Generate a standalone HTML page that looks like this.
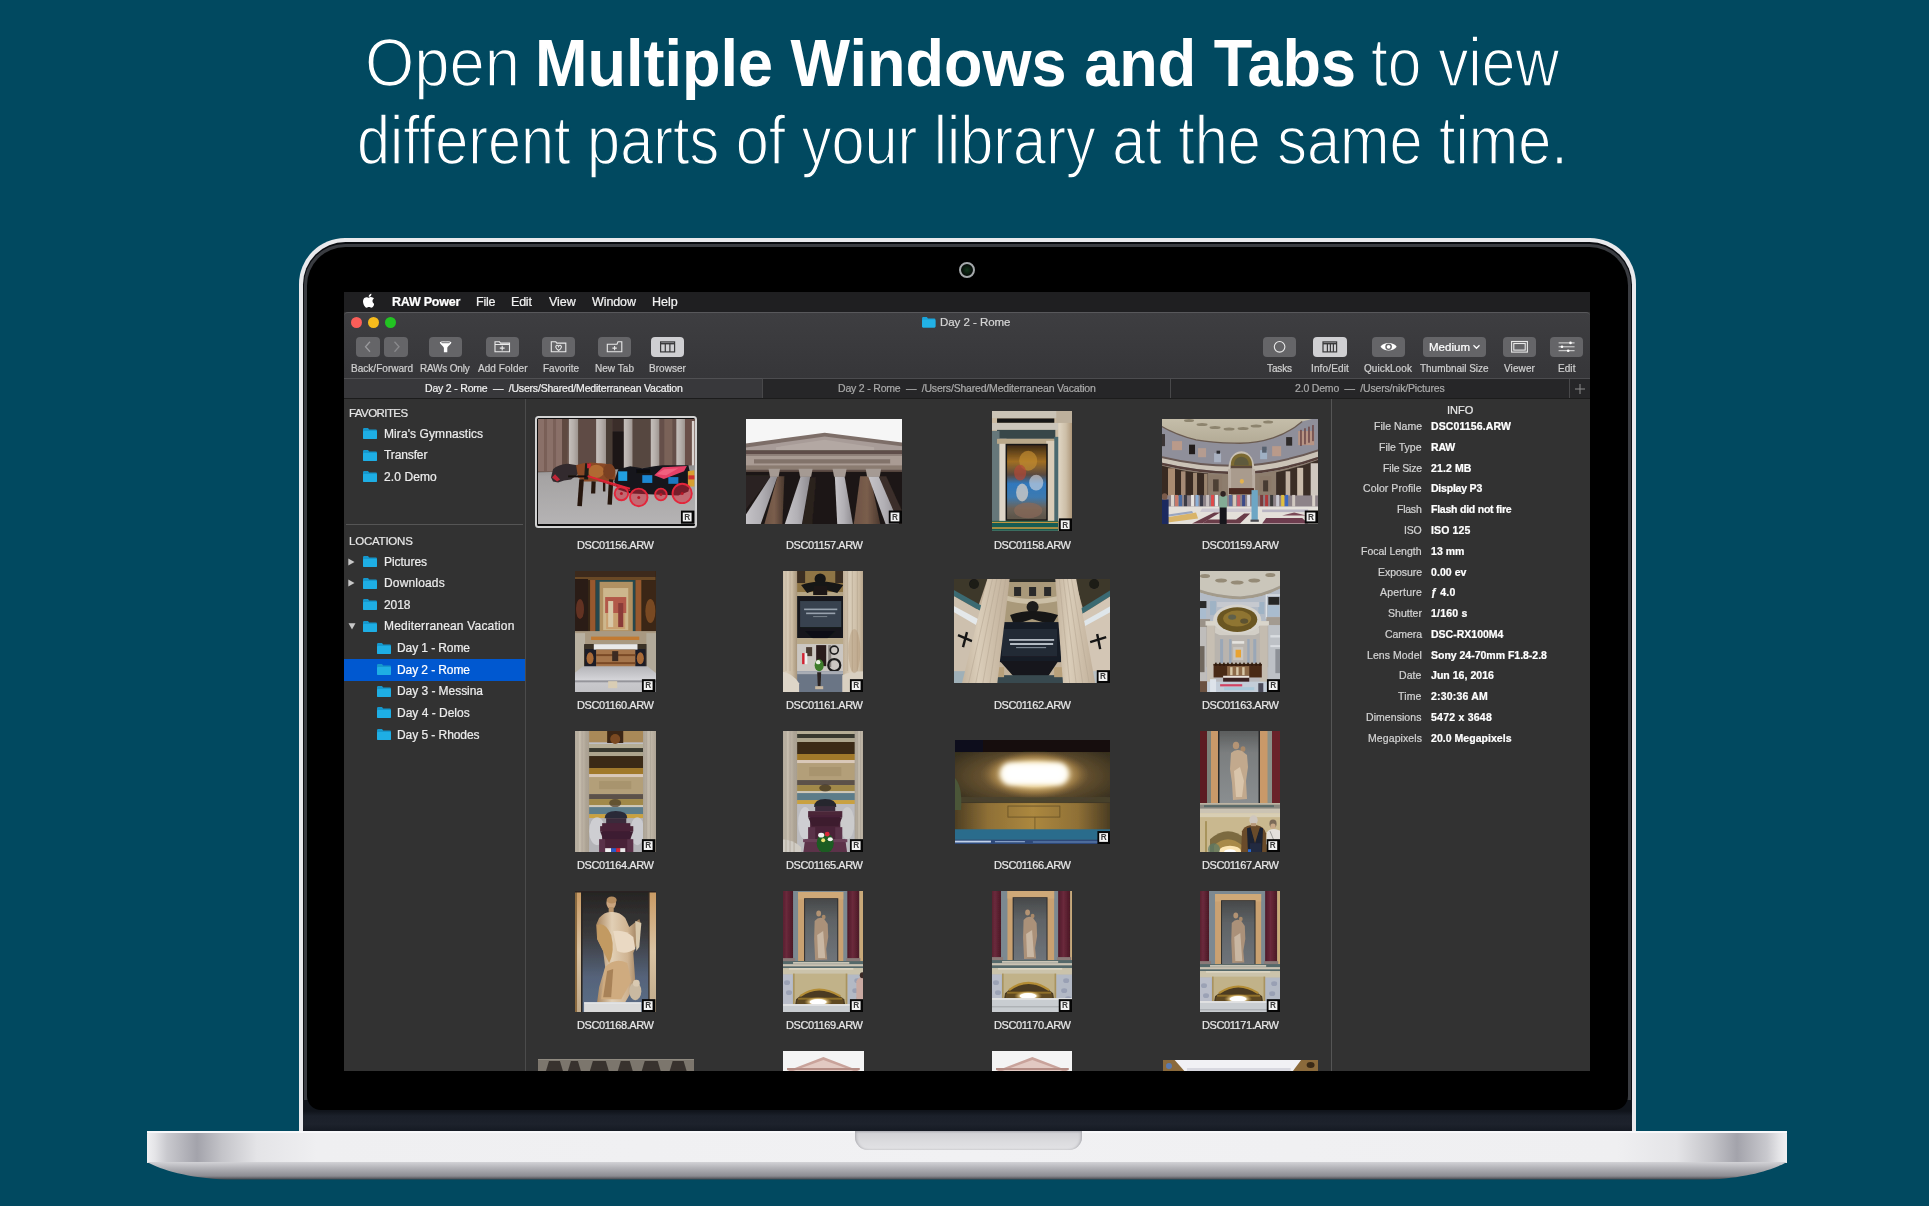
<!DOCTYPE html>
<html><head><meta charset="utf-8"><title>RAW Power</title>
<style>
*{box-sizing:border-box;margin:0;padding:0}
html,body{width:1929px;height:1206px;overflow:hidden;background:#014960;font-family:"Liberation Sans",sans-serif;}
div,span,svg{position:absolute}
.h{color:#fff;font-size:69px;white-space:nowrap;line-height:80px;transform-origin:0 0;-webkit-text-stroke:1.5px #014960}
.h.b{font-weight:bold;-webkit-text-stroke:0;font-size:66px}
.t{white-space:pre;line-height:20px;height:20px;will-change:transform;-webkit-text-stroke:.22px currentColor}
#lid{left:299px;top:238px;width:1337px;height:900px;border-radius:46px 46px 0 0;background:#e9e9ec}
#lid2{left:302.8px;top:241.7px;width:1329.4px;height:897px;border-radius:42.5px 42.5px 0 0;background:#0a0c10}
#lid3{left:303.7px;top:244.2px;width:1327.6px;height:894px;border-radius:41px 41px 0 0;background:#3a3c41}
#bezel{left:306.6px;top:246.6px;width:1321.8px;height:863.6px;border-radius:38.5px 38.5px 14px 14px;background:#000}
#hinge{left:303px;top:1100px;width:1329px;height:33px;background:linear-gradient(#10141b 0,#10141b 11px,#1b202a 16px,#1d222c 24px,#151a23 31px)}
#cam{left:959px;top:262px;width:16px;height:16px;border-radius:50%;border:2px solid #a4a8ab;background:radial-gradient(#12351b,#050a07 70%)}
#base{left:147px;top:1131px;width:1640px;height:32px;border-radius:3px 3px 0 0;
background:linear-gradient(90deg,#f0f0f2 0,#e4e4e7 8px,#c9c9ce 20px,#a3a3ab 50px,#c4c4c9 75px,#e4e4e7 110px,#efeff1 170px,#f1f1f3 820px,#efeff1 1470px,#e4e4e7 1530px,#c4c4c9 1565px,#a3a3ab 1590px,#c9c9ce 1620px,#e4e4e7 1632px,#f0f0f2 1640px)}
#basetop{left:147px;top:1131px;width:1640px;height:2px;background:#f8f8fa}
#bevel{left:147px;top:1162px;width:1640px;height:18px}
#notch{left:855px;top:1131px;width:226.5px;height:18.5px;border-radius:0 0 13px 13px;background:linear-gradient(#cfcfd3,#dcdcdf 60%,#e2e2e5);box-shadow:inset 2px 0 3px -1px #a8a8ad,inset -2px 0 3px -1px #a8a8ad,inset 0 2px 2px -1px #b4b4b9}
#screen{left:344px;top:292px;width:1246px;height:778.6px;background:#323232;overflow:hidden}
#menubar{left:344px;top:292px;width:1246px;height:20px;background:#1f1f21}
#titlebar{left:344px;top:312px;width:1246px;height:66px;background:linear-gradient(#3e3e41,#363639);border-top:1px solid #58585b;border-radius:4px 4px 0 0}
#tabbar{left:344px;top:378px;width:1246px;height:21px;background:#262628;border-top:1px solid #4c4c4f;border-bottom:1px solid #1c1c1c}
#tab1{left:344px;top:378px;width:418px;height:20px;background:#38383b;border-top:1px solid #505053}
.tsep{top:379px;width:1px;height:19px;background:#48484a}
.btn{top:337px;height:19.6px;border-radius:4px;background:#656568}
.btn.on{background:#cfcfd2}
.btn svg{left:0;top:0;width:100%;height:100%}
.tl{top:316.5px;width:11px;height:11px;border-radius:50%}
.vline{width:1px;background:#4b4b4b}
.fold{width:14px;height:11px}
</style></head><body>
<span class="h" style="left:365.3px;top:23px;transform:scaleX(.9176)">Open</span><span class="h b" style="left:534.8px;top:22.5px;transform:scaleX(.955)">Multiple Windows and Tabs</span><span class="h" style="left:1371.1px;top:23px;transform:scaleX(.8755)">to view</span>
<span class="h" style="left:357px;top:101px;transform:scaleX(.8611)">different parts of your library at the same time.</span>
<div id="lid"></div><div id="lid2"></div><div id="lid3"></div><div id="hinge"></div><div id="bezel"></div><div id="cam"></div>
<div id="base"></div><div id="basetop"></div>
<svg id="bevel" viewBox="0 0 1640 18" preserveAspectRatio="none"><defs><linearGradient id="bg1" x1="0" y1="0" x2="0" y2="1"><stop offset="0" stop-color="#d2d2d6"/><stop offset="0.35" stop-color="#b2b2b7"/><stop offset="0.8" stop-color="#8c8c92"/><stop offset="1" stop-color="#45474d"/></linearGradient></defs><path d="M0 0 H1640 C1625 8 1600 16 1560 17.5 H80 C40 16 15 8 0 0Z" fill="url(#bg1)"/></svg>
<div id="notch"></div>
<div id="screen"></div>
<div id="menubar"></div><div id="titlebar"></div><div id="tabbar"></div><div id="tab1"></div>
<div class="tsep" style="left:762px"></div><div class="tsep" style="left:1170px"></div><div class="tsep" style="left:1569px"></div>
<svg style="left:361.5px;top:293px;width:12.5px;height:14.8px" viewBox="0 0 170 200"><path fill="#fff" d="M150 105c0-25 20-37 21-38-12-17-30-19-36-19-15-2-30 9-38 9s-20-9-33-9c-17 0-33 10-41 25-18 31-5 76 12 101 9 12 19 26 32 25 13-1 18-8 33-8s20 8 33 8c14 0 22-12 31-25 10-14 14-28 14-29-1 0-27-10-28-40zM125 30c7-9 12-20 10-32-10 0-22 7-29 15-6 7-12 19-10 30 11 1 22-6 29-13z" transform="translate(0,10) scale(0.95)"/></svg>
<div class="tl" style="left:351.0px;background:#fb5e59"></div><div class="tl" style="left:368.3px;background:#f6bb1c"></div><div class="tl" style="left:385.3px;background:#22c322"></div>
<svg class="fold" style="left:922px;top:317px;width:13.5px;height:10.5px" viewBox="0 0 14 11"><path d="M0 1.2Q0 0 1.2 0H5l1.2 1.5H12.8Q14 1.5 14 2.7V9.8Q14 11 12.8 11H1.2Q0 11 0 9.8Z" fill="#1aa3d9"/><rect x="0" y="3" width="14" height="8" rx="1" fill="#22b2e6"/></svg>
<div class="btn" style="left:356.1px;width:24.3px"><svg viewBox="0 0 24.3 19"><path d="M14 4.5L9.5 9.5L14 14.5" fill="none" stroke="#9a9a9d" stroke-width="1.3"/></svg></div>
<div class="btn" style="left:383.8px;width:24.3px"><svg viewBox="0 0 24.3 19"><path d="M10.5 4.5L15 9.5L10.5 14.5" fill="none" stroke="#8a8a8d" stroke-width="1.3"/></svg></div>
<div class="btn" style="left:428.9px;width:33.2px"><svg viewBox="0 0 33.2 19"><path d="M10.8 5.2C10.8 3.6 22.4 3.6 22.4 5.2C22.4 6.2 18.3 9.8 18.3 10.6V15H14.9V10.6C14.9 9.8 10.8 6.2 10.8 5.2Z" fill="#fff"/><ellipse cx="16.6" cy="5.1" rx="4.3" ry="0.9" fill="#8a8a8d"/></svg></div>
<div class="btn" style="left:486.2px;width:33.0px"><svg viewBox="0 0 33 19"><path d="M9 4.5H13.5L14.5 5.8H23.5V14.5H9Z" fill="none" stroke="#e9e9e9" stroke-width="1.1"/><path d="M9 7.2H23.5M16.2 8.5V13.2M13.8 10.8H18.6" stroke="#e9e9e9" stroke-width="1.1" fill="none"/></svg></div>
<div class="btn" style="left:541.8px;width:33.3px"><svg viewBox="0 0 33.3 19"><path d="M9.3 4.5H13.8L14.8 5.8H23.8V14.5H9.3Z" fill="none" stroke="#e9e9e9" stroke-width="1.1"/><path d="M16.6 13.2C13.4 11 13.2 8.6 14.6 8.1C15.6 7.8 16.4 8.5 16.6 9.1C16.8 8.5 17.6 7.8 18.6 8.1C20 8.6 19.8 11 16.6 13.2Z" fill="none" stroke="#e9e9e9" stroke-width="1.1"/></svg></div>
<div class="btn" style="left:597.8px;width:33.1px"><svg viewBox="0 0 33.1 19"><path d="M9.3 14.5V7H19L20 4.5H23.8V14.5Z" fill="none" stroke="#e9e9e9" stroke-width="1.1"/><path d="M16.6 8.6V13M14.4 10.8H18.8" stroke="#e9e9e9" stroke-width="1.1"/></svg></div>
<div class="btn on" style="left:651.0px;width:33.2px"><svg viewBox="0 0 33.2 19"><rect x="9.6" y="4.6" width="14" height="10" fill="none" stroke="#3a3a3c" stroke-width="1.2"/><path d="M9.6 6.3H23.6" stroke="#3a3a3c" stroke-width="1.6"/><path d="M14.3 6V14.6M18.9 6V14.6" stroke="#3a3a3c" stroke-width="1.2"/></svg></div>
<div class="btn" style="left:1262.8px;width:33.2px"><svg viewBox="0 0 33.2 19"><circle cx="16.6" cy="9.5" r="5.3" fill="none" stroke="#e9e9e9" stroke-width="1.1"/></svg></div>
<div class="btn on" style="left:1313.2px;width:33.6px"><svg viewBox="0 0 33.6 19"><rect x="10" y="4.6" width="13.6" height="10" fill="none" stroke="#3a3a3c" stroke-width="1.2"/><path d="M10 6.3H23.6" stroke="#3a3a3c" stroke-width="1.6"/><path d="M14.4 6V14.6M17.4 6V14.6M20.4 6V14.6" stroke="#3a3a3c" stroke-width="1.2"/></svg></div>
<div class="btn" style="left:1371.8px;width:33.2px"><svg viewBox="0 0 33.2 19"><path d="M8.5 9.5C11.5 4.6 21.7 4.6 24.7 9.5C21.7 14.4 11.5 14.4 8.5 9.5Z" fill="#fff"/><circle cx="16.6" cy="9.5" r="3.3" fill="#656568"/><circle cx="16.6" cy="9.5" r="1.9" fill="#fff"/></svg></div>
<div class="btn" style="left:1422.9px;width:63.1px"><svg viewBox="0 0 63.1 19"><path d="M50.5 8L53.5 11L56.5 8" fill="none" stroke="#fff" stroke-width="1.2"/></svg></div>
<div class="btn" style="left:1502.8px;width:33.0px"><svg viewBox="0 0 33 19"><rect x="8.6" y="4.2" width="15.8" height="10.6" fill="none" stroke="#e9e9e9" stroke-width="1.1"/><rect x="10.8" y="6.2" width="11.4" height="6.6" fill="none" stroke="#e9e9e9" stroke-width="1.1"/></svg></div>
<div class="btn" style="left:1549.8px;width:33.2px"><svg viewBox="0 0 33.2 19"><path d="M8.6 5.6H24.6M8.6 9.5H24.6M8.6 13.4H24.6" stroke="#e9e9e9" stroke-width="0.9"/><circle cx="20.5" cy="5.6" r="1.3" fill="#fff"/><circle cx="12" cy="9.5" r="1.3" fill="#fff"/><circle cx="18.2" cy="13.4" r="1.3" fill="#fff"/></svg></div>
<svg style="left:1574px;top:383px;width:12px;height:12px" viewBox="0 0 12 12"><path d="M6 1V11M1 6H11" stroke="#8c8c8c" stroke-width="1"/></svg>
<div class="vline" style="left:525px;top:399px;height:671.6px"></div><div class="vline" style="left:1330.5px;top:399px;height:671.6px;background:#555"></div>
<div style="left:346px;top:524px;width:177px;height:1px;background:#555"></div>
<div style="left:344px;top:659.3px;width:181px;height:21.5px;background:#0058d0"></div>
<svg class="fold" style="left:363.0px;top:428.1px" viewBox="0 0 14 11"><path d="M0 1.2Q0 0 1.2 0H5l1.2 1.5H12.8Q14 1.5 14 2.7V9.8Q14 11 12.8 11H1.2Q0 11 0 9.8Z" fill="#1597cc"/><rect x="0" y="3" width="14" height="8" rx="1" fill="#1eaee4"/></svg><svg class="fold" style="left:363.0px;top:449.5px" viewBox="0 0 14 11"><path d="M0 1.2Q0 0 1.2 0H5l1.2 1.5H12.8Q14 1.5 14 2.7V9.8Q14 11 12.8 11H1.2Q0 11 0 9.8Z" fill="#1597cc"/><rect x="0" y="3" width="14" height="8" rx="1" fill="#1eaee4"/></svg><svg class="fold" style="left:363.0px;top:471.3px" viewBox="0 0 14 11"><path d="M0 1.2Q0 0 1.2 0H5l1.2 1.5H12.8Q14 1.5 14 2.7V9.8Q14 11 12.8 11H1.2Q0 11 0 9.8Z" fill="#1597cc"/><rect x="0" y="3" width="14" height="8" rx="1" fill="#1eaee4"/></svg><svg class="fold" style="left:363.0px;top:556.0px" viewBox="0 0 14 11"><path d="M0 1.2Q0 0 1.2 0H5l1.2 1.5H12.8Q14 1.5 14 2.7V9.8Q14 11 12.8 11H1.2Q0 11 0 9.8Z" fill="#1597cc"/><rect x="0" y="3" width="14" height="8" rx="1" fill="#1eaee4"/></svg><svg class="fold" style="left:363.0px;top:577.5px" viewBox="0 0 14 11"><path d="M0 1.2Q0 0 1.2 0H5l1.2 1.5H12.8Q14 1.5 14 2.7V9.8Q14 11 12.8 11H1.2Q0 11 0 9.8Z" fill="#1597cc"/><rect x="0" y="3" width="14" height="8" rx="1" fill="#1eaee4"/></svg><svg class="fold" style="left:363.0px;top:598.9px" viewBox="0 0 14 11"><path d="M0 1.2Q0 0 1.2 0H5l1.2 1.5H12.8Q14 1.5 14 2.7V9.8Q14 11 12.8 11H1.2Q0 11 0 9.8Z" fill="#1597cc"/><rect x="0" y="3" width="14" height="8" rx="1" fill="#1eaee4"/></svg><svg class="fold" style="left:363.0px;top:620.7px" viewBox="0 0 14 11"><path d="M0 1.2Q0 0 1.2 0H5l1.2 1.5H12.8Q14 1.5 14 2.7V9.8Q14 11 12.8 11H1.2Q0 11 0 9.8Z" fill="#1597cc"/><rect x="0" y="3" width="14" height="8" rx="1" fill="#1eaee4"/></svg><svg class="fold" style="left:376.8px;top:642.5px" viewBox="0 0 14 11"><path d="M0 1.2Q0 0 1.2 0H5l1.2 1.5H12.8Q14 1.5 14 2.7V9.8Q14 11 12.8 11H1.2Q0 11 0 9.8Z" fill="#1597cc"/><rect x="0" y="3" width="14" height="8" rx="1" fill="#1eaee4"/></svg><svg class="fold" style="left:376.8px;top:664.2px" viewBox="0 0 14 11"><path d="M0 1.2Q0 0 1.2 0H5l1.2 1.5H12.8Q14 1.5 14 2.7V9.8Q14 11 12.8 11H1.2Q0 11 0 9.8Z" fill="#1597cc"/><rect x="0" y="3" width="14" height="8" rx="1" fill="#1eaee4"/></svg><svg class="fold" style="left:376.8px;top:685.7px" viewBox="0 0 14 11"><path d="M0 1.2Q0 0 1.2 0H5l1.2 1.5H12.8Q14 1.5 14 2.7V9.8Q14 11 12.8 11H1.2Q0 11 0 9.8Z" fill="#1597cc"/><rect x="0" y="3" width="14" height="8" rx="1" fill="#1eaee4"/></svg><svg class="fold" style="left:376.8px;top:707.3px" viewBox="0 0 14 11"><path d="M0 1.2Q0 0 1.2 0H5l1.2 1.5H12.8Q14 1.5 14 2.7V9.8Q14 11 12.8 11H1.2Q0 11 0 9.8Z" fill="#1597cc"/><rect x="0" y="3" width="14" height="8" rx="1" fill="#1eaee4"/></svg><svg class="fold" style="left:376.8px;top:729.0px" viewBox="0 0 14 11"><path d="M0 1.2Q0 0 1.2 0H5l1.2 1.5H12.8Q14 1.5 14 2.7V9.8Q14 11 12.8 11H1.2Q0 11 0 9.8Z" fill="#1597cc"/><rect x="0" y="3" width="14" height="8" rx="1" fill="#1eaee4"/></svg>
<svg style="left:348px;top:557.8px;width:7px;height:8px" viewBox="0 0 7 8"><path d="M0.3 0.5L6.5 4L0.3 7.5Z" fill="#c8c8c8"/></svg><svg style="left:348px;top:579.3px;width:7px;height:8px" viewBox="0 0 7 8"><path d="M0.3 0.5L6.5 4L0.3 7.5Z" fill="#c8c8c8"/></svg><svg style="left:347.5px;top:623px;width:8px;height:7px" viewBox="0 0 8 7"><path d="M0.5 0.3H7.5L4 6.5Z" fill="#c8c8c8"/></svg>
<div id="gridclip" style="left:526px;top:399px;width:804px;height:671.6px;overflow:hidden;will-change:transform">
<div style="left:8.9px;top:16.9px;width:162.4px;height:111.7px;border:2px solid #d2d2d2;border-radius:3.5px;background:#0c0c0c"></div>
<svg style="left:12.2px;top:20.4px;width:156.4px;height:104.7px" viewBox="0 0 156 104" preserveAspectRatio="none"><defs><linearGradient id="g1" x1="0" y1="0" x2="0" y2="1"><stop offset="0" stop-color="#5d4a43"/><stop offset="1" stop-color="#6b574e"/></linearGradient><linearGradient id="g2" x1="0" y1="0" x2="0" y2="1"><stop offset="0" stop-color="#918f8f"/><stop offset="0.18" stop-color="#a5a3a3"/><stop offset="1" stop-color="#b7b5b6"/></linearGradient><linearGradient id="g3" x1="0" y1="0" x2="1" y2="0"><stop offset="0" stop-color="#c5bfbb"/><stop offset="0.5" stop-color="#b6afab"/><stop offset="1" stop-color="#9e9590"/></linearGradient><filter id="b2001" x="-10%" y="-10%" width="120%" height="120%"><feGaussianBlur stdDeviation="0.6"/></filter></defs><g filter="url(#b2001)"><rect x="-5" y="-5" width="166" height="58" fill="url(#g1)"/><rect x="-5" y="-2" width="33" height="54" fill="#8a7068"/><rect x="6" y="-2" width="3" height="54" fill="#7a6058"/><rect x="15" y="-2" width="3" height="54" fill="#7a6058"/><rect x="24" y="-2" width="5" height="54" fill="#5e4840"/><rect x="40" y="-2" width="18" height="54" fill="#5e4c44"/><rect x="67.8" y="-2" width="7" height="52" fill="#4a3c36"/><rect x="94.2" y="-2" width="18.5" height="52" fill="#574740"/><rect x="121" y="-2" width="17" height="50" fill="#65504a"/><rect x="126" y="0" width="8" height="48" fill="#7a6258"/><rect x="74.5" y="-2" width="11.1" height="52" fill="#3a2e2a"/><rect x="74.5" y="12.5" width="11.1" height="38" fill="#1a1614"/><rect x="146.6" y="-2" width="10" height="50" fill="#6a5048"/><rect x="30.8" y="-2" width="9.2" height="52.23" fill="url(#g3)"/><rect x="58" y="-2" width="9.8" height="51.55" fill="url(#g3)"/><rect x="85.6" y="-2" width="8.6" height="50.86" fill="url(#g3)"/><rect x="112.5" y="-2" width="8.5" height="50.1875" fill="url(#g3)"/><rect x="138" y="-2" width="8.6" height="49.55" fill="url(#g3)"/><rect x="153.5" y="2" width="2.5" height="46" fill="#dcd4d0"/><path d="M-5 53 L30 52.5 L80 50 L156 46 L160 46 L160 110 L-5 110 Z" fill="url(#g2)"/><path d="M13 58 L15 50 Q20 45 30 44.5 L39 46 L41 54 L33 60 L26 61 L20 63 L15 62 Z" fill="#332b2d"/><path d="M17 55 L22 60 L19 62 L14 58 Z" fill="#c02838"/><path d="M38 46 Q48 42 60 44 Q72 43 77 50 L77.5 60 Q70 63 60 62 L46 62 L40 58 Z" fill="#8a4a25"/><ellipse cx="58" cy="52" rx="8" ry="6.5" fill="#b06b31"/><ellipse cx="71" cy="52" rx="6" ry="7.5" fill="#7a4020"/><path d="M47 44 L51 44 L50 60 L46 60 Z" fill="#1d1a18"/><path d="M49 44 L53 44.5 L52 49 L49 49 Z" fill="#d02838"/><path d="M43.5 60 L41.5 86.5" stroke="#27170f" stroke-width="4.6" fill="none"/><path d="M73 60 L71.5 85" stroke="#27170f" stroke-width="4.4" fill="none"/><path d="M55.5 62 L55 74" stroke="#27170f" stroke-width="4.2" fill="none"/><path d="M66 62 L66 72" stroke="#27170f" stroke-width="2.4" fill="none"/><path d="M30 57 L48 57" stroke="#15110f" stroke-width="2" fill="none"/><path d="M76 62 L80 50 L92 47 L104 49 L116 47 L124 46 L150 46 L153 60 L150 72 L140 76 L92 74 L80 70 Z" fill="#16171c"/><path d="M115.9 55.8 L124.5 48 L148.5 46.6 L145.7 52 L125.5 59.6 Z" fill="#e53f66"/><path d="M118 55 L126 50 L140 49 L128 56 Z" fill="#f0607e"/><rect x="80" y="52" width="9" height="9.5" fill="#20a0e0"/><rect x="104" y="55.8" width="10" height="7.7" fill="#1c88d2"/><rect x="130" y="57.7" width="10" height="6.7" fill="#1a78c0"/><rect x="98" y="50" width="14" height="4" fill="#0c0c10"/><path d="M149.5 52 L156 51 L156 67 L149.5 67 Z" fill="#d8a030"/><rect x="150" y="56" width="6" height="4" fill="#d03030"/><path d="M49.5 56.7 L91.8 69.2" stroke="#e02335" stroke-width="1.8" fill="none"/><path d="M60 61 L92 71" stroke="#c81e2e" stroke-width="1.2" fill="none"/><circle cx="83.2" cy="74" r="6.7" fill="#d8283a" fill-opacity=".5" stroke="#e3263a" stroke-width="1.9"/><circle cx="83.2" cy="74" r="1.5" fill="#b81828"/><circle cx="100.5" cy="77.9" r="8.7" fill="#d8283a" fill-opacity=".5" stroke="#e3263a" stroke-width="1.9"/><circle cx="100.5" cy="77.9" r="1.5" fill="#b81828"/><circle cx="122.6" cy="75" r="5.8" fill="#d8283a" fill-opacity=".5" stroke="#e3263a" stroke-width="1.9"/><circle cx="122.6" cy="75" r="1.5" fill="#b81828"/><circle cx="143.8" cy="74" r="9.6" fill="#d8283a" fill-opacity=".5" stroke="#e3263a" stroke-width="1.9"/><circle cx="143.8" cy="74" r="1.5" fill="#b81828"/></g><rect x="142.6" y="91" width="13.4" height="13" fill="#050505"/><rect x="144.4" y="93" width="8.8" height="8.8" fill="#f2f2f2"/><text x="148.8" y="100.3" font-family="Liberation Sans,sans-serif" font-weight="bold" font-size="8.2" fill="#3a3a3a" text-anchor="middle">R</text></svg>
<svg style="left:220.0px;top:20.2px;width:156.2px;height:104.6px" viewBox="0 0 156 104" preserveAspectRatio="none"><defs><linearGradient id="g4" x1="0" y1="0" x2="1" y2="0"><stop offset="0" stop-color="#c6c4c8"/><stop offset="0.5" stop-color="#b2b0b5"/><stop offset="1" stop-color="#8e8b90"/></linearGradient><linearGradient id="g5" x1="0" y1="0" x2="1" y2="0"><stop offset="0" stop-color="#6c5244"/><stop offset="0.5" stop-color="#7a5e4c"/><stop offset="1" stop-color="#4a382e"/></linearGradient><filter id="b2002" x="-10%" y="-10%" width="120%" height="120%"><feGaussianBlur stdDeviation="0.6"/></filter></defs><g filter="url(#b2002)"><rect x="-5" y="-5" width="166" height="60" fill="#f6f6f6"/><rect x="-5" y="50" width="166" height="60" fill="#1f1917"/><path d="M-2 24.5 L78.6 13.6 L158 23.6 L158 52 L-2 52 Z" fill="#7d6e68"/><path d="M-2 28.5 L78.6 17.4 L158 27.4 L158 33 L-2 33 Z" fill="#a89c98"/><path d="M30 28 L78.6 20.6 L128 28 L128 31.5 L30 31.5 Z" fill="#b3a8a3"/><rect x="-2" y="31" width="160" height="4" fill="#5e4e48"/><rect x="-2" y="34.8" width="160" height="2.2" fill="#8d7e77"/><rect x="-2" y="36.7" width="160" height="9.8" fill="#a99b93"/><rect x="8" y="40" width="136" height="4.2" fill="#75655e" fill-opacity=".75"/><rect x="-2" y="46.3" width="160" height="5" fill="#8b7b71"/><rect x="-2" y="50.5" width="160" height="2" fill="#5c4c44"/><path d="M-2 56 L26 56 L-2 92 Z" fill="#2b2322"/><path d="M31.5 57 L38.3 57 L36.3 106 L18 106 Z" fill="url(#g5)"/><path d="M114 57 L124 57 L134.4 106 L107.5 106 Z" fill="url(#g5)"/><path d="M64 58 L70 58 L66 106 L56 106 Z" fill="#33282280"/><path d="M133 57 L140 57 L158 96 L158 106 L150 106 Z" fill="#3a2e2a"/><path d="M24.8 57 L31.5 57 L14.2 106 L-2 106 L-2 98 Z" fill="url(#g4)"/><path d="M54.6 57 L64.2 57 L55.6 106 L38.3 106 Z" fill="url(#g4)"/><path d="M88.7 57 L98.4 57 L107 106 L91.2 106 Z" fill="url(#g4)"/><path d="M122 57 L132.5 57 L153.6 106 L140 106 Z" fill="url(#g4)"/><path d="M22.5 49.5 L34 49.5 L32.5 57.5 L24 57.5 Z" fill="#a59a93"/><path d="M52.5 49.5 L66.5 49.5 L65 57.5 L54 57.5 Z" fill="#a59a93"/><path d="M86.5 49.5 L100.5 49.5 L99 57.5 L88 57.5 Z" fill="#a59a93"/><path d="M119.5 49.5 L135 49.5 L133.5 57.5 L121 57.5 Z" fill="#a59a93"/></g><rect x="142.6" y="91" width="13.4" height="13" fill="#050505"/><rect x="144.4" y="93" width="8.8" height="8.8" fill="#f2f2f2"/><text x="148.8" y="100.3" font-family="Liberation Sans,sans-serif" font-weight="bold" font-size="8.2" fill="#3a3a3a" text-anchor="middle">R</text></svg>
<svg style="left:465.9px;top:11.9px;width:80.4px;height:120.3px" viewBox="0 0 80 121" preserveAspectRatio="none"><defs><linearGradient id="g6" x1="0" y1="0" x2="0" y2="1"><stop offset="0" stop-color="#3d2a14"/><stop offset="0.22" stop-color="#a06e24"/><stop offset="0.4" stop-color="#5a4a40"/><stop offset="0.52" stop-color="#2f78bd"/><stop offset="0.7" stop-color="#3d7ab0"/><stop offset="0.85" stop-color="#6b6258"/><stop offset="1" stop-color="#5b5348"/></linearGradient><linearGradient id="g7" x1="0" y1="0" x2="1" y2="0"><stop offset="0" stop-color="#e0d6c4"/><stop offset="0.5" stop-color="#cdbfa8"/><stop offset="1" stop-color="#a88f70"/></linearGradient><filter id="b2003" x="-10%" y="-10%" width="120%" height="120%"><feGaussianBlur stdDeviation="0.6"/></filter></defs><g filter="url(#b2003)"><rect x="-5" y="-5" width="90" height="130" fill="#c9b9a1"/><rect x="0" y="0" width="80" height="7" fill="#cac3b6"/><rect x="5" y="7.5" width="57" height="4.4" fill="#181816"/><rect x="0" y="12" width="66" height="7" fill="#cbc5ba"/><rect x="5" y="19" width="58" height="9" fill="#37474a"/><rect x="0" y="20" width="7.5" height="91" fill="#66777a"/><rect x="7.5" y="28" width="7" height="83" fill="#ddd5c8"/><rect x="5" y="28" width="58" height="5" fill="#b9a88a"/><rect x="54" y="30" width="9" height="81" fill="#d9cdb9"/><rect x="62" y="26" width="4.5" height="85" fill="#48696f"/><rect x="66" y="10" width="15" height="102" fill="url(#g7)"/><rect x="64" y="0" width="17" height="12" fill="#bdb09c"/><rect x="13.5" y="33" width="42" height="77.5" fill="#131313"/><rect x="15" y="34.5" width="39" height="74.5" fill="url(#g6)"/><ellipse cx="36" cy="50" rx="9" ry="10" fill="#c08a30" fill-opacity=".7"/><ellipse cx="28" cy="62" rx="6" ry="8" fill="#b04838" fill-opacity=".7"/><ellipse cx="30" cy="82" rx="6" ry="9" fill="#d8d0c8" fill-opacity=".75"/><ellipse cx="44" cy="72" rx="7" ry="8" fill="#d8dce4" fill-opacity=".6"/><ellipse cx="36" cy="100" rx="14" ry="8" fill="#8a6a58" fill-opacity=".7"/><rect x="0" y="110.5" width="66" height="10" fill="#175b52"/><rect x="0" y="111.5" width="66" height="1" fill="#e2a13e"/><rect x="0" y="117" width="66" height="1.4" fill="#e2a13e"/><rect x="66" y="110.5" width="15" height="10" fill="#8a7a60"/></g><rect x="66.6" y="108" width="13.4" height="13" fill="#050505"/><rect x="68.4" y="110" width="8.8" height="8.8" fill="#f2f2f2"/><text x="72.8" y="117.3" font-family="Liberation Sans,sans-serif" font-weight="bold" font-size="8.2" fill="#3a3a3a" text-anchor="middle">R</text></svg>
<svg style="left:636.3px;top:20.2px;width:156.2px;height:104.6px" viewBox="0 0 156 104" preserveAspectRatio="none"><defs><linearGradient id="g8" x1="0" y1="0" x2="0" y2="1"><stop offset="0" stop-color="#c6bfab"/><stop offset="1" stop-color="#b3ab96"/></linearGradient><filter id="b2004" x="-10%" y="-10%" width="120%" height="120%"><feGaussianBlur stdDeviation="0.6"/></filter></defs><g filter="url(#b2004)"><rect x="-5" y="-5" width="166" height="115" fill="#8f8f9a"/><path d="M-2 -2 L158 -2 L140 2.4 Q128 13 111 18.8 Q92 25 72 24 Q50 23.5 34 20.7 Q14 16 -2 6.5 Z" fill="url(#g8)"/><ellipse cx="27" cy="1.5" rx="5" ry="1.5" fill="#8d846e"/><ellipse cx="40" cy="5.5" rx="5.5" ry="1.5" fill="#8d846e"/><ellipse cx="53" cy="8.5" rx="5.5" ry="1.5" fill="#8d846e"/><ellipse cx="67" cy="10" rx="5.5" ry="1.5" fill="#8d846e"/><ellipse cx="81" cy="9.5" rx="5.5" ry="1.5" fill="#8d846e"/><ellipse cx="94" cy="7" rx="5.5" ry="1.5" fill="#8d846e"/><ellipse cx="106" cy="3" rx="5" ry="1.5" fill="#8d846e"/><path d="M-2 6.5 Q14 16 34 20.7 Q50 23.5 72 24 Q92 25 111 18.8 Q128 13 140 2.4" fill="none" stroke="#6b5b51" stroke-width="1.3"/><rect x="10" y="22" width="10" height="9" fill="#b99a8a"/><rect x="36" y="29" width="8" height="9" fill="#b59c90"/><rect x="52" y="34" width="7" height="9" fill="#a9b1c1"/><rect x="98" y="31" width="7" height="9" fill="#9fb0c4"/><rect x="110" y="27" width="9" height="10" fill="#b99a8a"/><rect x="136" y="12" width="16" height="14" fill="#b79484"/><rect x="27" y="25.5" width="6" height="9.5" fill="#241f1c"/><rect x="-2" y="15" width="5" height="12" fill="#3a3634"/><rect x="124" y="18" width="6" height="8.5" fill="#2f2b2a"/><rect x="54.5" y="31.5" width="3.5" height="3" fill="#2a2a2e"/><rect x="100" y="27.5" width="4.5" height="6" fill="#56606e"/><rect x="138" y="10.8" width="1.6" height="16" fill="#6e4a4a"/><rect x="142" y="9.2" width="1.6" height="16" fill="#6e4a4a"/><rect x="146" y="7.6" width="1.6" height="16" fill="#6e4a4a"/><rect x="150" y="6" width="1.6" height="16" fill="#6e4a4a"/><path d="M-2 38 Q36 47 72 47 Q112 47 158 31 L158 37 Q112 53 72 52.5 Q36 52 -2 43 Z" fill="#cbc3b7"/><path d="M-2 36.5 Q36 45.5 72 45.5 Q112 45.5 158 29.5 L158 31.5 Q112 47.5 72 47.5 Q36 47.5 -2 38.5 Z" fill="#6a5a55"/><path d="M-2 43 Q36 52 72 52.5 Q112 53 158 37 L158 39.5 Q112 55.5 72 55 Q36 54.5 -2 45.5 Z" fill="#57403a"/><path d="M-2 45.5 Q36 54.5 72 55 Q112 55.5 158 39.5 L158 90 L-2 90 Z" fill="#8d7d6d"/><path d="M-2 46 Q24 53 46 54.3 L46 76 L-2 76 Z" fill="#372a23"/><path d="M114 53 Q138 48 158 40 L158 80 L114 78 Z" fill="#3a2e28"/><rect x="6" y="49" width="7" height="33" fill="#a98b71"/><rect x="19" y="52" width="4.5" height="30" fill="#a58a74"/><rect x="31" y="53.5" width="4" height="28.5" fill="#9f8872"/><rect x="42" y="54.5" width="3.6" height="27.5" fill="#9a846e"/><rect x="123.5" y="52" width="4.6" height="30" fill="#c1b1a1"/><rect x="135" y="48.5" width="6" height="33.5" fill="#cbbcab"/><rect x="148.5" y="44" width="8" height="38" fill="#cfc7bf"/><rect x="47.6" y="56" width="12.5" height="16" fill="#8b7969"/><rect x="51" y="60" width="5.6" height="12" fill="#4e4036"/><rect x="97.6" y="57" width="11.5" height="15" fill="#8b7969"/><rect x="101" y="61" width="5" height="11" fill="#463a32"/><path d="M66 56 Q65.5 32.5 79.3 32 Q93 32.5 92.6 56 Z" fill="#c9c1b5"/><path d="M68.6 47 Q68.6 34.6 79.3 34.2 Q90 34.6 90 47 Z" fill="#7b6a31"/><path d="M72 46 Q72 38 79.3 37.6 Q86.6 38 86.6 46 Z" fill="#5f5a3c"/><rect x="68.6" y="46.5" width="21.4" height="3" fill="#5a463a"/><rect x="68.6" y="49" width="21.4" height="20" fill="#a99b8d"/><rect x="66" y="50" width="3" height="26" fill="#b9ada1"/><rect x="90" y="50" width="3" height="26" fill="#b9ada1"/><ellipse cx="79.8" cy="62" rx="2" ry="2.3" fill="#e3b24e"/><rect x="66.8" y="68.7" width="25" height="6" fill="#4b2b21"/><rect x="-2" y="76" width="160" height="14" fill="#8d8388"/><rect x="9" y="75.5" width="3" height="11.5" fill="#dcd4cc"/><rect x="13" y="75.5" width="3" height="11.5" fill="#c87a6a"/><rect x="17" y="75.5" width="3" height="11.5" fill="#4a6aa0"/><rect x="22" y="75.5" width="3" height="11.5" fill="#3a3a44"/><rect x="29" y="75.5" width="3" height="11.5" fill="#e8e4e0"/><rect x="33.5" y="75.5" width="3" height="11.5" fill="#8ab0d8"/><rect x="38" y="75.5" width="3" height="11.5" fill="#3a3a48"/><rect x="44" y="75.5" width="3" height="11.5" fill="#c8c0c0"/><rect x="49" y="75.5" width="3" height="11.5" fill="#e04848"/><rect x="53" y="75.5" width="3" height="11.5" fill="#e8e8e8"/><rect x="67" y="75.5" width="3" height="11.5" fill="#5a6a9a"/><rect x="71" y="75.5" width="3" height="11.5" fill="#d8c8b8"/><rect x="75" y="75.5" width="3" height="11.5" fill="#c85a6a"/><rect x="80" y="75.5" width="3" height="11.5" fill="#3a4a88"/><rect x="85" y="75.5" width="3" height="11.5" fill="#d8d8e0"/><rect x="98" y="75.5" width="3" height="11.5" fill="#7a3a3a"/><rect x="103" y="75.5" width="3" height="11.5" fill="#b03838"/><rect x="108" y="75.5" width="3" height="11.5" fill="#3a3a3a"/><rect x="114" y="75.5" width="3" height="11.5" fill="#c8c8d0"/><rect x="119" y="75.5" width="3" height="11.5" fill="#e0c040"/><rect x="123" y="75.5" width="3" height="11.5" fill="#3a68c0"/><rect x="130" y="75.5" width="3" height="11.5" fill="#d0c8c0"/><rect x="150" y="75.5" width="3" height="11.5" fill="#d8d0c8"/><rect x="-2" y="87" width="160" height="22" fill="#e4e0da"/><path d="M30 104 L52 93 L58 93 L40 104 Z" fill="#6b3c4a"/><path d="M40 104 L46 100 L74 100 L82 94 L88 94 L78 104 Z" fill="#6b3c4a"/><path d="M4 98 L34 93 L36 99 L6 103 Z" fill="#d9b468"/><path d="M6 95 L30 91.5 L31 93.5 L7 97 Z" fill="#9aa6c0"/><path d="M100 104 L104 98.5 L140 98.5 L146 104 Z" fill="#6e3e50"/><rect x="100" y="90" width="46" height="2.6" fill="#b9b5c3"/><path d="M120 96 L132 93 L144 96 Z" fill="#7a4858"/><path d="M40 89 L96 89 L92 92.5 L38 92.5 Z" fill="#cdc8d0"/><rect x="57.6" y="87.5" width="7" height="18" fill="#17171b"/><rect x="57.2" y="76.5" width="7.8" height="11.5" fill="#83ab95"/><ellipse cx="61" cy="74.4" rx="2.7" ry="2.9" fill="#2e2420"/><rect x="-2" y="80" width="8.6" height="26" fill="#1b2b5e"/><ellipse cx="2.6" cy="77" rx="2.8" ry="3.2" fill="#7a5a4a"/><rect x="89.4" y="70.7" width="6.3" height="30.7" fill="#6ea6c4"/><rect x="88.4" y="100" width="8.3" height="2.2" fill="#4a4a50"/></g><rect x="142.6" y="91" width="13.4" height="13" fill="#050505"/><rect x="144.4" y="93" width="8.8" height="8.8" fill="#f2f2f2"/><text x="148.8" y="100.3" font-family="Liberation Sans,sans-serif" font-weight="bold" font-size="8.2" fill="#3a3a3a" text-anchor="middle">R</text></svg>
<svg style="left:49.3px;top:171.8px;width:80.4px;height:121.2px" viewBox="0 0 80 121" preserveAspectRatio="none"><defs><linearGradient id="g9" x1="0" y1="0" x2="0" y2="1"><stop offset="0" stop-color="#b4b4b8"/><stop offset="0.45" stop-color="#d4d4d8"/><stop offset="0.5" stop-color="#8a8a90"/><stop offset="0.56" stop-color="#c8c8cc"/><stop offset="1" stop-color="#c0c0c4"/></linearGradient><filter id="b2005" x="-10%" y="-10%" width="120%" height="120%"><feGaussianBlur stdDeviation="0.6"/></filter></defs><g filter="url(#b2005)"><rect x="-5" y="-5" width="90" height="70" fill="#382718"/><rect x="0" y="0" width="80" height="6" fill="#3d2b1a"/><rect x="0" y="6" width="80" height="3" fill="#6a4a28"/><rect x="0" y="8" width="13" height="54" fill="#2a1c15"/><ellipse cx="5" cy="38" rx="4" ry="10" fill="#7a3a28" fill-opacity=".7"/><rect x="15" y="9" width="5.5" height="52" fill="#96592e"/><rect x="60" y="9" width="6" height="52" fill="#96592e"/><rect x="20.5" y="9" width="39.5" height="54" fill="#28474d"/><rect x="24.5" y="10.8" width="33" height="52" fill="#b19162"/><rect x="28" y="17" width="25" height="42" fill="#cdb78d"/><rect x="30" y="26" width="21" height="16" fill="#b2584a"/><rect x="31" y="42" width="19" height="16" fill="#c9a070"/><rect x="33" y="30" width="5" height="26" fill="#d8c8a8"/><rect x="43" y="32" width="5" height="24" fill="#8a3a38"/><rect x="67" y="10" width="14" height="50" fill="#3b2614"/><ellipse cx="75" cy="40" rx="5" ry="12" fill="#8a5228" fill-opacity=".8"/><rect x="-2" y="60" width="84" height="13" fill="#a99981"/><rect x="16" y="65.5" width="48" height="3.4" fill="#c17a31"/><rect x="0" y="62" width="10" height="40" fill="#b9b1a1"/><rect x="71" y="62" width="10" height="40" fill="#b2aa9a"/><rect x="9" y="73" width="62" height="24" fill="#3a3026"/><rect x="10" y="78" width="11" height="18" fill="#1a1a27"/><rect x="60" y="78" width="10" height="18" fill="#1a1a27"/><ellipse cx="15" cy="87" rx="3.5" ry="6" fill="#a86a38"/><ellipse cx="65" cy="87" rx="3.5" ry="6" fill="#a86a38"/><rect x="18.7" y="73" width="43.5" height="5.5" fill="#e9e9e9"/><rect x="21" y="78.5" width="39" height="19" fill="#a5754b"/><rect x="21" y="83" width="39" height="2" fill="#7a4a28"/><rect x="21" y="91" width="39" height="2" fill="#7a4a28"/><rect x="37" y="80" width="6" height="10" fill="#3a2a20"/><path d="M8 95 L72 95 L82 103 L82 125 L-2 125 L-2 103 Z" fill="url(#g9)"/><rect x="33" y="110" width="9" height="7" fill="#d9cdb4"/></g><rect x="66.6" y="108" width="13.4" height="13" fill="#050505"/><rect x="68.4" y="110" width="8.8" height="8.8" fill="#f2f2f2"/><text x="72.8" y="117.3" font-family="Liberation Sans,sans-serif" font-weight="bold" font-size="8.2" fill="#3a3a3a" text-anchor="middle">R</text></svg>
<svg style="left:257.1px;top:171.8px;width:80.4px;height:121.2px" viewBox="0 0 80 121" preserveAspectRatio="none"><defs><linearGradient id="g10" x1="0" y1="0" x2="1" y2="0"><stop offset="0" stop-color="#bfae96"/><stop offset="0.3" stop-color="#d9cdb9"/><stop offset="0.7" stop-color="#cbbba3"/><stop offset="1" stop-color="#a8957b"/></linearGradient><filter id="b2006" x="-10%" y="-10%" width="120%" height="120%"><feGaussianBlur stdDeviation="0.6"/></filter></defs><g filter="url(#b2006)"><rect x="-5" y="-5" width="90" height="130" fill="#c6c2bd"/><rect x="14" y="0" width="46" height="25" fill="#8f7444"/><rect x="14" y="21" width="46" height="4" fill="#b5a585"/><rect x="14" y="0" width="8" height="12" fill="#3a2e22"/><rect x="52" y="0" width="8" height="12" fill="#3a2e22"/><ellipse cx="37" cy="8" rx="5.6" ry="5.6" fill="#171615"/><path d="M18 14 Q37 7 60 14 L54 22 L37 17.5 L24 22 Z" fill="#161514"/><rect x="30" y="14" width="14" height="10" fill="#1a1918"/><rect x="14" y="25" width="46" height="42" fill="#14161a"/><rect x="17" y="30" width="41" height="26" fill="#39434f"/><rect x="21" y="37.5" width="33" height="1.6" fill="#98a2ae"/><rect x="23" y="41.5" width="29" height="1.6" fill="#98a2ae"/><rect x="30" y="45" width="14" height="1" fill="#7a848e"/><path d="M22 60 L52 60 L44 68 L30 68 Z" fill="#0f1114"/><rect x="14" y="67" width="46" height="6" fill="#b9a989"/><rect x="14" y="73" width="46" height="28" fill="#cbc7c2"/><rect x="33" y="74" width="10" height="21" fill="#2b1a1d"/><rect x="23" y="76" width="6" height="9" fill="#4a3a30"/><rect x="45" y="74" width="3" height="22" fill="#8a8480"/><rect x="19" y="82" width="2.6" height="11" fill="#d22233"/><rect x="21.6" y="82" width="2.6" height="11" fill="#f0f0f0"/><circle cx="51" cy="79" r="4" fill="none" stroke="#1e1e1e" stroke-width="1.6"/><circle cx="51" cy="94" r="6" fill="none" stroke="#1e1e1e" stroke-width="2.2"/><rect x="14" y="100" width="46" height="25" fill="#6b7585"/><rect x="14" y="100" width="46" height="3" fill="#a9adb5"/><ellipse cx="36" cy="94" rx="4.5" ry="6" fill="#3d7c2c"/><ellipse cx="35" cy="91" rx="2.2" ry="2.2" fill="#e8f0e0"/><path d="M34 101 L38 101 L37.4 115 L34.6 115 Z" fill="#2a2420"/><rect x="32" y="115" width="8" height="3" fill="#c8b8a0"/><rect x="-2" y="-2" width="16" height="125" fill="url(#g10)"/><rect x="59.7" y="-2" width="23" height="125" fill="url(#g10)"/><path d="M-2 100 Q10 102 16 112 L16 125 L-2 125 Z" fill="#ddd5c8"/><path d="M59 104 Q66 100 82 100 L82 125 L59 125 Z" fill="#d8cfc0"/><path d="M3 0 L3 100" stroke="#b8a890" stroke-width="0.7" fill="none"/><path d="M7 0 L7 100" stroke="#b8a890" stroke-width="0.7" fill="none"/><path d="M11 0 L11 100" stroke="#b8a890" stroke-width="0.7" fill="none"/><path d="M64 0 L64 100" stroke="#b8a890" stroke-width="0.7" fill="none"/><path d="M69 0 L69 100" stroke="#b8a890" stroke-width="0.7" fill="none"/><path d="M74 0 L74 100" stroke="#b8a890" stroke-width="0.7" fill="none"/><ellipse cx="71" cy="80" rx="6" ry="22" fill="#a88a68" fill-opacity=".35"/></g><rect x="66.6" y="108" width="13.4" height="13" fill="#050505"/><rect x="68.4" y="110" width="8.8" height="8.8" fill="#f2f2f2"/><text x="72.8" y="117.3" font-family="Liberation Sans,sans-serif" font-weight="bold" font-size="8.2" fill="#3a3a3a" text-anchor="middle">R</text></svg>
<svg style="left:428.2px;top:180.2px;width:156.2px;height:104.2px" viewBox="0 0 156 104" preserveAspectRatio="none"><defs><linearGradient id="g11" x1="0" y1="0" x2="1" y2="0"><stop offset="0" stop-color="#c3b39d"/><stop offset="0.35" stop-color="#dacdb9"/><stop offset="1" stop-color="#bfae98"/></linearGradient><filter id="b2007" x="-10%" y="-10%" width="120%" height="120%"><feGaussianBlur stdDeviation="0.6"/></filter></defs><g filter="url(#b2007)"><rect x="-5" y="-5" width="166" height="115" fill="#c3b29b"/><path d="M-2 -2 L34 -2 L22 34 L-2 22 Z" fill="#3e382c"/><ellipse cx="20" cy="5" rx="5" ry="5" fill="#1a1a18"/><path d="M-2 10 L30 28 L28 33 L-2 16 Z" fill="#3a6b72"/><path d="M-2 16 L28 33 L20 104 L-2 104 Z" fill="#cdc0ae"/><path d="M-2 26 L24 40 L22 46 L-2 32 Z" fill="#e4e8ea"/><path d="M158 -2 L120 -2 L130 34 L158 20 Z" fill="#3e382c"/><ellipse cx="140" cy="5" rx="5" ry="5" fill="#1a1a18"/><path d="M158 10 L126 30 L128 35 L158 16 Z" fill="#3a6b72"/><path d="M158 16 L128 35 L140 104 L158 104 Z" fill="#d3c6b5"/><path d="M158 26 L130 42 L131 47 L158 32 Z" fill="#dfe6ea"/><rect x="-2" y="92" width="30" height="12" fill="#9fb0b8"/><rect x="138" y="92" width="20" height="12" fill="#b8c0c4"/><path d="M4 56 L18 62" stroke="#151515" stroke-width="2.4" fill="none"/><path d="M13 53 L9 68" stroke="#151515" stroke-width="2.4" fill="none"/><path d="M136 63 L152 58" stroke="#151515" stroke-width="2.4" fill="none"/><path d="M143 55 L146 70" stroke="#151515" stroke-width="2.4" fill="none"/><rect x="50" y="-2" width="60" height="50" fill="#a9997a"/><rect x="50" y="-2" width="60" height="5" fill="#2c2a26"/><rect x="60" y="8" width="7" height="9" fill="#2a2a2a"/><rect x="75" y="8" width="7" height="9" fill="#2a2a2a"/><rect x="90" y="8" width="7" height="9" fill="#2a2a2a"/><path d="M50 16 Q78 24 108 16 L108 21 Q78 29 50 21 Z" fill="#cbbfa6"/><ellipse cx="78.5" cy="28" rx="6" ry="6" fill="#1d1c1a"/><path d="M56 36 Q78 28 104 36 L98 46 L78 40 L60 46 Z" fill="#181818"/><rect x="44" y="43" width="63" height="40" fill="#191e27"/><rect x="48" y="50" width="55" height="27" fill="#232b36"/><rect x="55" y="60" width="45" height="1.6" fill="#c3cad2"/><rect x="56" y="64" width="43" height="1.8" fill="#c3cad2"/><rect x="62" y="68" width="30" height="1" fill="#8a94a0"/><path d="M46 82 L104 82 L92 100 L62 100 Z" fill="#14161a"/><rect x="40" y="96" width="72" height="10" fill="#39494f"/><rect x="40" y="88" width="10" height="10" fill="#b8a07a"/><rect x="100" y="88" width="12" height="10" fill="#b8a07a"/><path d="M34 -2 L55.8 -2 L43 106 L7.5 106 Z" fill="url(#g11)"/><path d="M101 -2 L121.7 -2 L141.4 106 L109 106 Z" fill="url(#g11)"/><path d="M38.4 0 L14.6 104" stroke="#b7a893" stroke-width="0.6" fill="none"/><path d="M105.1 0 L115.5 104" stroke="#b7a893" stroke-width="0.6" fill="none"/><path d="M42.8 0 L21.7 104" stroke="#b7a893" stroke-width="0.6" fill="none"/><path d="M109.2 0 L122 104" stroke="#b7a893" stroke-width="0.6" fill="none"/><path d="M47.2 0 L28.8 104" stroke="#b7a893" stroke-width="0.6" fill="none"/><path d="M113.3 0 L128.5 104" stroke="#b7a893" stroke-width="0.6" fill="none"/><path d="M51.6 0 L35.9 104" stroke="#b7a893" stroke-width="0.6" fill="none"/><path d="M117.4 0 L135 104" stroke="#b7a893" stroke-width="0.6" fill="none"/></g><rect x="142.6" y="91" width="13.4" height="13" fill="#050505"/><rect x="144.4" y="93" width="8.8" height="8.8" fill="#f2f2f2"/><text x="148.8" y="100.3" font-family="Liberation Sans,sans-serif" font-weight="bold" font-size="8.2" fill="#3a3a3a" text-anchor="middle">R</text></svg>
<svg style="left:674.0px;top:171.9px;width:80.4px;height:121.2px" viewBox="0 0 80 121" preserveAspectRatio="none"><defs><filter id="b2008" x="-10%" y="-10%" width="120%" height="120%"><feGaussianBlur stdDeviation="0.6"/></filter></defs><g filter="url(#b2008)"><rect x="-5" y="-5" width="90" height="130" fill="#b9b9bd"/><path d="M-2 -2 L82 -2 L82 13.5 Q62 24 40 25.5 Q18 25 -2 18 Z" fill="#cac6ba"/><ellipse cx="5" cy="5" rx="5" ry="2" fill="#958b77"/><ellipse cx="21" cy="9.5" rx="6" ry="2" fill="#958b77"/><ellipse cx="37" cy="11.5" rx="6.5" ry="2" fill="#958b77"/><ellipse cx="54" cy="9.5" rx="6" ry="2" fill="#958b77"/><ellipse cx="70" cy="4" rx="5" ry="2" fill="#958b77"/><path d="M-2 18 Q18 25 40 25.5 Q62 24 82 13.5 L82 16.5 Q62 27.5 40 28.5 Q18 28 -2 21 Z" fill="#a39b8b"/><path d="M-2 21 Q18 28 40 28.5 Q62 27.5 82 16.5 L82 50 L-2 52 Z" fill="#b3bbc6"/><rect x="68" y="26" width="11" height="7.7" fill="#252525"/><rect x="66" y="24" width="14.5" height="23" fill="none" stroke="#dde1e5" stroke-width="1.3"/><rect x="67.5" y="34.5" width="11.5" height="11" fill="#a9bccf"/><rect x="-2" y="30" width="8.4" height="7" fill="#2b2b2b"/><rect x="-2" y="37.5" width="8" height="10" fill="#a9bccf"/><rect x="10" y="30" width="6" height="14" fill="#9fb3c5"/><rect x="58" y="31" width="6" height="12" fill="#9fb3c5"/><rect x="17" y="31" width="42" height="5" fill="#c6c9cf"/><rect x="-2" y="50" width="84" height="46" fill="#b7b2ac"/><rect x="-2" y="48" width="12" height="8" fill="#9a9288"/><rect x="66" y="46" width="16" height="8" fill="#a39b91"/><ellipse cx="37" cy="49" rx="24" ry="15.5" fill="#d6d3cc"/><ellipse cx="37" cy="48.5" rx="20" ry="12.3" fill="#6b5622"/><ellipse cx="37" cy="47.5" rx="14" ry="8" fill="#8f7430"/><ellipse cx="32" cy="46" rx="4" ry="2.6" fill="#4a5a58" fill-opacity=".7"/><ellipse cx="44" cy="50" rx="4" ry="2.6" fill="#3c3c30" fill-opacity=".6"/><path d="M15 56 Q37 70 59 56 L59 62 Q37 74 15 62 Z" fill="#d2cec6"/><rect x="15" y="64" width="44" height="30" fill="#b9b4ae"/><rect x="20" y="68" width="3" height="24" fill="#9aa7b7"/><rect x="29" y="68" width="2.4" height="24" fill="#9aa7b7"/><rect x="47" y="68" width="2.4" height="24" fill="#9aa7b7"/><rect x="53" y="68" width="3" height="24" fill="#9aa7b7"/><rect x="32" y="70" width="12" height="2.6" fill="#e5e3df"/><rect x="33" y="76" width="10" height="13" fill="#c9c5bf"/><rect x="35.4" y="78.6" width="5.4" height="7.7" fill="#e8a332"/><rect x="7" y="52" width="7.6" height="60" fill="#c7bfb3"/><rect x="59.5" y="52" width="7.6" height="60" fill="#c4bcb0"/><rect x="5.5" y="50" width="10.6" height="4.5" fill="#d9d5cb"/><rect x="58" y="50" width="10.6" height="4.5" fill="#d9d5cb"/><rect x="-2" y="56" width="8" height="56" fill="#bfbdbb"/><rect x="0" y="75" width="4.5" height="26" fill="#6f675f"/><rect x="68" y="54" width="14" height="58" fill="#bdc1c6"/><rect x="75" y="78" width="5" height="24" fill="#8d9197"/><rect x="70" y="64" width="10" height="2.4" fill="#d9dde1"/><rect x="70" y="74" width="10" height="2" fill="#d9dde1"/><rect x="13.5" y="92.8" width="48" height="13.5" fill="#4a2919"/><rect x="13.5" y="92.8" width="48" height="1.6" fill="#38200f"/><rect x="15" y="91.5" width="1.6" height="3" fill="#2f1a0e"/><rect x="19" y="91.5" width="1.6" height="3" fill="#2f1a0e"/><rect x="23" y="91.5" width="1.6" height="3" fill="#2f1a0e"/><rect x="27" y="91.5" width="1.6" height="3" fill="#2f1a0e"/><rect x="31" y="91.5" width="1.6" height="3" fill="#2f1a0e"/><rect x="35" y="91.5" width="1.6" height="3" fill="#2f1a0e"/><rect x="39" y="91.5" width="1.6" height="3" fill="#2f1a0e"/><rect x="43" y="91.5" width="1.6" height="3" fill="#2f1a0e"/><rect x="47" y="91.5" width="1.6" height="3" fill="#2f1a0e"/><rect x="51" y="91.5" width="1.6" height="3" fill="#2f1a0e"/><rect x="55" y="91.5" width="1.6" height="3" fill="#2f1a0e"/><rect x="59" y="91.5" width="1.6" height="3" fill="#2f1a0e"/><rect x="27" y="95" width="22" height="9.5" fill="#8d6a4a"/><rect x="30" y="96" width="2.4" height="8" fill="#d8c8a8"/><rect x="36" y="96" width="2.4" height="8" fill="#d8c8a8"/><rect x="42" y="96" width="2.4" height="8" fill="#d8c8a8"/><rect x="23" y="106" width="26" height="5.5" fill="#3b2020"/><rect x="23" y="104.6" width="26" height="2" fill="#e9e3dd"/><rect x="-2" y="110.5" width="84" height="13" fill="#c3cdd8"/><rect x="20" y="113" width="22" height="2.2" fill="#d24262"/><rect x="24" y="116" width="30" height="3" fill="#a9c9d9"/><rect x="-2" y="110" width="9" height="13" fill="#6b5141"/><rect x="58" y="112" width="5" height="9" fill="#4a4a58"/><rect x="10" y="108" width="6" height="13" fill="#dde3ea"/></g><rect x="66.6" y="108" width="13.4" height="13" fill="#050505"/><rect x="68.4" y="110" width="8.8" height="8.8" fill="#f2f2f2"/><text x="72.8" y="117.3" font-family="Liberation Sans,sans-serif" font-weight="bold" font-size="8.2" fill="#3a3a3a" text-anchor="middle">R</text></svg>
<svg style="left:49.3px;top:331.8px;width:80.4px;height:121.2px" viewBox="0 0 80 121" preserveAspectRatio="none"><defs><linearGradient id="g12" x1="0" y1="0" x2="1" y2="0"><stop offset="0" stop-color="#a9a092"/><stop offset="0.4" stop-color="#c6bdae"/><stop offset="1" stop-color="#a79d8e"/></linearGradient><filter id="b2009" x="-10%" y="-10%" width="120%" height="120%"><feGaussianBlur stdDeviation="0.6"/></filter></defs><g filter="url(#b2009)"><rect x="-5" y="-5" width="90" height="130" fill="#bfbfc3"/><rect x="14" y="-2" width="54" height="13.3" fill="#a98959"/><rect x="14" y="13" width="54" height="4.3" fill="#b5ad95"/><rect x="14" y="17" width="54" height="4.3" fill="#39392f"/><rect x="14" y="21" width="54" height="4.3" fill="#ada58d"/><rect x="14" y="25" width="54" height="12.3" fill="#3a2a18"/><rect x="14" y="37" width="54" height="6.3" fill="#a17929"/><rect x="14" y="43" width="54" height="3.3" fill="#d9c8b8"/><rect x="14" y="46" width="54" height="17.3" fill="#b39f79"/><rect x="14" y="63" width="54" height="5.3" fill="#5b5149"/><rect x="14" y="68" width="54" height="6.3" fill="#a18949"/><rect x="14" y="74" width="54" height="2.3" fill="#cfc8b8"/><rect x="14" y="76" width="54" height="7.3" fill="#5b7b89"/><rect x="14" y="83" width="54" height="4.3" fill="#c9a141"/><rect x="14" y="87" width="54" height="40.3" fill="#b3b3b7"/><rect x="32" y="0" width="16" height="12" fill="#3b2515"/><ellipse cx="40" cy="8" rx="5" ry="5" fill="#7a4a20"/><rect x="24" y="50" width="32" height="8" fill="#a8946e"/><ellipse cx="40" cy="72" rx="6" ry="4" fill="#4a3a28" fill-opacity=".7"/><ellipse cx="22" cy="100" rx="8" ry="14" fill="#d4d4d8" fill-opacity=".8"/><ellipse cx="62" cy="100" rx="7" ry="14" fill="#d0d0d4" fill-opacity=".8"/><path d="M29.5 87 Q30 80 40.5 80 Q52 80 52 87 Z" fill="#2a2a38"/><rect x="31" y="87" width="20" height="6" fill="#3a2a3a"/><rect x="25" y="95" width="33" height="5" fill="#4b2539"/><rect x="27" y="92" width="28" height="32" fill="#4a2438"/><path d="M25 100 L58 100 L55 108 L28 108 Z" fill="#3e1e30"/><rect x="24" y="108" width="6" height="14" fill="#5a3048"/><rect x="52" y="108" width="6" height="14" fill="#5a3048"/><rect x="30" y="117" width="6" height="5" fill="#f0f0f0"/><rect x="36" y="117" width="5" height="5" fill="#2a58c8"/><rect x="41" y="117" width="4" height="5" fill="#d82838"/><rect x="45" y="117" width="5" height="5" fill="#e8e8e8"/><rect x="-2" y="-2" width="16" height="125" fill="url(#g12)"/><rect x="67.7" y="-2" width="15" height="125" fill="url(#g12)"/><path d="M3 0 L3 121" stroke="#a9a094" stroke-width="0.7" fill="none"/><path d="M7 0 L7 121" stroke="#a9a094" stroke-width="0.7" fill="none"/><path d="M11 0 L11 121" stroke="#a9a094" stroke-width="0.7" fill="none"/><path d="M71 0 L71 121" stroke="#a9a094" stroke-width="0.7" fill="none"/><path d="M75 0 L75 121" stroke="#a9a094" stroke-width="0.7" fill="none"/></g><rect x="66.6" y="108" width="13.4" height="13" fill="#050505"/><rect x="68.4" y="110" width="8.8" height="8.8" fill="#f2f2f2"/><text x="72.8" y="117.3" font-family="Liberation Sans,sans-serif" font-weight="bold" font-size="8.2" fill="#3a3a3a" text-anchor="middle">R</text></svg>
<svg style="left:257.1px;top:331.8px;width:80.4px;height:121.2px" viewBox="0 0 80 121" preserveAspectRatio="none"><defs><linearGradient id="g13" x1="0" y1="0" x2="1" y2="0"><stop offset="0" stop-color="#a9a092"/><stop offset="0.4" stop-color="#c6bdae"/><stop offset="1" stop-color="#a79d8e"/></linearGradient><filter id="b2010" x="-10%" y="-10%" width="120%" height="120%"><feGaussianBlur stdDeviation="0.6"/></filter></defs><g filter="url(#b2010)"><rect x="-5" y="-5" width="90" height="130" fill="#bcbcc0"/><rect x="14" y="-1" width="58" height="4.3" fill="#b5ad95"/><rect x="14" y="3" width="58" height="4.3" fill="#39392f"/><rect x="14" y="7" width="58" height="4.3" fill="#ada58d"/><rect x="14" y="11" width="58" height="12.3" fill="#3a2a18"/><rect x="14" y="23" width="58" height="6.3" fill="#a17929"/><rect x="14" y="29" width="58" height="3.3" fill="#d9c8b8"/><rect x="14" y="32" width="58" height="17.3" fill="#b39f79"/><rect x="14" y="49" width="58" height="5.3" fill="#5b5149"/><rect x="14" y="54" width="58" height="6.3" fill="#a18949"/><rect x="14" y="60" width="58" height="2.3" fill="#cfc8b8"/><rect x="14" y="62" width="58" height="7.3" fill="#5b7b89"/><rect x="14" y="69" width="58" height="4.3" fill="#c9a141"/><rect x="14" y="73" width="58" height="40.3" fill="#b3b3b7"/><rect x="14" y="73" width="58" height="50" fill="#bcbcc0"/><rect x="26" y="36" width="32" height="9" fill="#a8946e"/><ellipse cx="42" cy="57" rx="6" ry="3.5" fill="#3a2c20" fill-opacity=".7"/><ellipse cx="22" cy="92" rx="7" ry="16" fill="#d2d2d6" fill-opacity=".8"/><ellipse cx="64" cy="92" rx="7" ry="16" fill="#cecece" fill-opacity=".8"/><path d="M31 76 Q31 68 42 68 Q53 68 53 76 Z" fill="#25252f"/><rect x="32" y="75" width="20" height="5" fill="#3b2b3b"/><rect x="25" y="80" width="34" height="6" fill="#4b2539"/><rect x="27" y="84" width="30" height="24" fill="#4a2438"/><path d="M25 86 L59 86 L55 95 L29 95 Z" fill="#3d1d2f"/><rect x="25" y="96" width="7" height="12" fill="#5a3048"/><rect x="52" y="96" width="7" height="12" fill="#5a3048"/><path d="M20 123 L22 108 L62 108 L64 123 Z" fill="#5b3149"/><rect x="20" y="108" width="44" height="3" fill="#6b4159"/><ellipse cx="42" cy="112" rx="8.5" ry="10" fill="#1b5b21"/><ellipse cx="38" cy="104" rx="3" ry="2.4" fill="#f0f0f0"/><ellipse cx="44" cy="103" rx="2.4" ry="2.4" fill="#d82838"/><ellipse cx="47" cy="108" rx="2.6" ry="2" fill="#f4f4f0"/><ellipse cx="40" cy="109" rx="2" ry="2" fill="#e8e070"/><rect x="-2" y="-2" width="16" height="125" fill="url(#g13)"/><rect x="71.3" y="-2" width="12" height="125" fill="url(#g13)"/><path d="M-2 108 Q10 108 18 116 L18 123 L-2 123 Z" fill="#d0ccc4"/><path d="M3 0 L3 121" stroke="#a9a094" stroke-width="0.7" fill="none"/><path d="M7 0 L7 121" stroke="#a9a094" stroke-width="0.7" fill="none"/><path d="M11 0 L11 121" stroke="#a9a094" stroke-width="0.7" fill="none"/><path d="M74 0 L74 121" stroke="#a9a094" stroke-width="0.7" fill="none"/><path d="M77 0 L77 121" stroke="#a9a094" stroke-width="0.7" fill="none"/></g><rect x="66.6" y="108" width="13.4" height="13" fill="#050505"/><rect x="68.4" y="110" width="8.8" height="8.8" fill="#f2f2f2"/><text x="72.8" y="117.3" font-family="Liberation Sans,sans-serif" font-weight="bold" font-size="8.2" fill="#3a3a3a" text-anchor="middle">R</text></svg>
<svg style="left:428.7px;top:340.8px;width:155.8px;height:104.1px" viewBox="0 0 156 104" preserveAspectRatio="none"><defs><radialGradient id="g14" cx="0.5" cy="0.45" r="0.6"><stop offset="0" stop-color="#7d6640" stop-opacity="1"/><stop offset="0.55" stop-color="#64502f" stop-opacity="1"/><stop offset="1" stop-color="#38301f" stop-opacity="1"/></radialGradient><radialGradient id="g15" cx="0.5" cy="0.5" r="0.5"><stop offset="0" stop-color="#fff6d8" stop-opacity="1"/><stop offset="0.5" stop-color="#f6d894" stop-opacity="0.85"/><stop offset="0.78" stop-color="#c79c55" stop-opacity="0.45"/><stop offset="1" stop-color="#8a6c3c" stop-opacity="0"/></radialGradient><linearGradient id="g16" x1="0" y1="0" x2="1" y2="0"><stop offset="0" stop-color="#4a3c22"/><stop offset="0.22" stop-color="#8f7036"/><stop offset="0.5" stop-color="#ac883f"/><stop offset="0.78" stop-color="#8f7036"/><stop offset="1" stop-color="#453821"/></linearGradient><filter id="gl11" x="-30%" y="-60%" width="160%" height="220%"><feGaussianBlur stdDeviation="2.6"/></filter><filter id="b2011" x="-10%" y="-10%" width="120%" height="120%"><feGaussianBlur stdDeviation="0.6"/></filter></defs><g filter="url(#b2011)"><rect x="-5" y="-5" width="166" height="115" fill="#64502f"/><rect x="-2" y="10" width="160" height="58" fill="url(#g14)"/><rect x="-2" y="-2" width="160" height="14" fill="#130f0d"/><rect x="-2" y="-2" width="30" height="14" fill="#0d111c"/><rect x="-2" y="63" width="160" height="28" fill="url(#g16)"/><rect x="-2" y="57" width="160" height="5.5" fill="#4a4330" fill-opacity=".8"/><rect x="53" y="66" width="52" height="11" fill="none" stroke="#6b5428" stroke-width="0.9"/><path d="M80 77 L80 90" stroke="#6e5628" stroke-width="0.8" fill="none"/><ellipse cx="80" cy="34.5" rx="55" ry="24" fill="url(#g15)"/><rect x="45" y="22.5" width="69" height="22.5" rx="11" fill="#fffdf3" filter="url(#gl11)"/><rect x="50" y="26" width="59" height="15.5" rx="7.7" fill="#ffffff" filter="url(#gl11)"/><path d="M-2 36 Q8 44 6 70 L-2 70 Z" fill="#4b5638"/><rect x="-2" y="89.2" width="160" height="10.6" fill="#2c6c8c"/><rect x="-2" y="99.6" width="160" height="6" fill="#2d4a7a"/><rect x="0" y="100.6" width="36" height="1.8" fill="#c2d2ea"/><rect x="40" y="101" width="30" height="1.2" fill="#8ea6cc"/><rect x="78" y="101.4" width="70" height="1" fill="#6f8fbe"/></g><rect x="142.6" y="91" width="13.4" height="13" fill="#050505"/><rect x="144.4" y="93" width="8.8" height="8.8" fill="#f2f2f2"/><text x="148.8" y="100.3" font-family="Liberation Sans,sans-serif" font-weight="bold" font-size="8.2" fill="#3a3a3a" text-anchor="middle">R</text></svg>
<svg style="left:674.3px;top:331.9px;width:80.0px;height:121.2px" viewBox="0 0 80 121" preserveAspectRatio="none"><defs><linearGradient id="g17" x1="0" y1="0" x2="0" y2="1"><stop offset="0" stop-color="#5b5d5d"/><stop offset="0.3" stop-color="#7b7e7f"/><stop offset="1" stop-color="#8a8e90"/></linearGradient><filter id="b2012" x="-10%" y="-10%" width="120%" height="120%"><feGaussianBlur stdDeviation="0.6"/></filter></defs><g filter="url(#b2012)"><rect x="-5" y="-5" width="90" height="130" fill="#c9b991"/><rect x="-2" y="-2" width="9" height="75" fill="#5b1b21"/><rect x="72" y="-2" width="10" height="75" fill="#6b2129"/><rect x="7" y="-2" width="4.5" height="75" fill="#7b8179"/><rect x="67" y="-2" width="5" height="75" fill="#8b9189"/><rect x="11" y="-2" width="7.5" height="75" fill="#c99969"/><rect x="60" y="-2" width="7.5" height="75" fill="#c99969"/><rect x="18" y="-2" width="42" height="74" fill="#29292b"/><rect x="19.5" y="0" width="39" height="72" fill="url(#g17)"/><ellipse cx="36" cy="14.5" rx="3.2" ry="3.8" fill="#b49474"/><ellipse cx="43" cy="18" rx="2.4" ry="2.8" fill="#a88868"/><path d="M31 22 Q36 17 42 20 L47 24 L48 36 L46 50 L47 68 L33 69 L32 52 L30 38 Z" fill="#c2a98d"/><path d="M34 40 L40 36 L44 50 L42 66 L36 66 Z" fill="#d9c5ab"/><rect x="-2" y="72" width="84" height="6" fill="#8b8981"/><rect x="-2" y="77.5" width="84" height="4.5" fill="#cbc3b3"/><rect x="-2" y="72" width="84" height="1.4" fill="#c3bba9"/><rect x="4" y="74" width="70" height="2" fill="#5a6a68"/><rect x="-2" y="82" width="84" height="42" fill="#c9b88f"/><rect x="-2" y="82" width="84" height="4" fill="#d8ceb4"/><rect x="5" y="90" width="2" height="32" fill="#a8945c"/><path d="M10 123 L10 108 Q28 92 46 108 L46 123 Z" fill="#7b6a41"/><path d="M14 123 L14 114 Q28 102 42 114 L42 123 Z" fill="#a88a48"/><ellipse cx="30" cy="120" rx="11" ry="5.5" fill="#fbe5b3"/><ellipse cx="30" cy="121" rx="6" ry="3" fill="#ffffff"/><ellipse cx="14" cy="118" rx="6" ry="6" fill="#5a7a68" fill-opacity=".7"/><path d="M41 123 L42 100 Q44 95 50 94 L57 94 Q64 95 66 102 L67 123 Z" fill="#6b4b29"/><ellipse cx="53.5" cy="89" rx="4.2" ry="4.8" fill="#cfc7bf"/><rect x="51" y="92" width="5" height="3" fill="#b89878"/><path d="M47 97 L50.5 96 L55 112 L60 96 L63 97 L62 123 L48 123 Z" fill="#1a2030"/><rect x="50" y="112" width="11" height="11" fill="#232b40"/><rect x="48" y="118" width="3" height="3" fill="#2a6ad0"/><path d="M66 113 L67 101 Q70 97 76 98 L82 100 L82 113 Z" fill="#e3dfdb"/><ellipse cx="73" cy="92.5" rx="3.6" ry="4.2" fill="#7b6b59"/><ellipse cx="73" cy="95" rx="2.6" ry="2.6" fill="#c8a888"/><path d="M70 100 L75 112" stroke="#8a8a88" stroke-width="0.8" fill="none"/></g><rect x="66.6" y="108" width="13.4" height="13" fill="#050505"/><rect x="68.4" y="110" width="8.8" height="8.8" fill="#f2f2f2"/><text x="72.8" y="117.3" font-family="Liberation Sans,sans-serif" font-weight="bold" font-size="8.2" fill="#3a3a3a" text-anchor="middle">R</text></svg>
<svg style="left:49.3px;top:491.8px;width:80.4px;height:121.2px" viewBox="0 0 80 121" preserveAspectRatio="none"><defs><linearGradient id="g18" x1="0" y1="0" x2="0" y2="1"><stop offset="0" stop-color="#262422"/><stop offset="0.35" stop-color="#3a3a3c"/><stop offset="0.7" stop-color="#55637a"/><stop offset="1" stop-color="#5d6f88"/></linearGradient><linearGradient id="g19" x1="0" y1="0" x2="0" y2="1"><stop offset="0" stop-color="#c99961"/><stop offset="0.5" stop-color="#d9c3a3"/><stop offset="1" stop-color="#bfa989"/></linearGradient><linearGradient id="g20" x1="0" y1="0" x2="1" y2="0"><stop offset="0" stop-color="#a8845c"/><stop offset="0.35" stop-color="#e1cfb5"/><stop offset="0.7" stop-color="#cfb391"/><stop offset="1" stop-color="#8f6f4d"/></linearGradient><filter id="b2013" x="-10%" y="-10%" width="120%" height="120%"><feGaussianBlur stdDeviation="0.6"/></filter></defs><g filter="url(#b2013)"><rect x="-5" y="-5" width="90" height="130" fill="#3a3a3c"/><rect x="6" y="0" width="68" height="123" fill="url(#g18)"/><rect x="-2" y="-2" width="8.5" height="125" fill="url(#g19)"/><rect x="73.5" y="-2" width="9" height="125" fill="url(#g19)"/><rect x="0" y="0" width="2" height="121" fill="#8a6a40"/><rect x="6" y="0" width="1.5" height="121" fill="#2a2420"/><rect x="73" y="0" width="1.2" height="121" fill="#2a2420"/><rect x="-2" y="-2" width="84" height="3.5" fill="#2a2420"/><ellipse cx="36" cy="12" rx="4.8" ry="5.8" fill="#c9a47e"/><ellipse cx="36.5" cy="9" rx="5" ry="3.6" fill="#b48c60"/><rect x="33.5" y="16" width="5" height="5" fill="#b8946c"/><path d="M24 27 Q30 20 36 21 Q44 20 50 27 L54 36 L64 28 L66 34 L62 52 L58 62 L60 90 L54 104 L50 111 L22 111 L24 96 L30 76 L28 60 L22 48 L21 34 Z" fill="url(#g20)"/><path d="M22 34 Q30 30 36 44 Q40 60 34 72 L28 60 L22 48 Z" fill="#c29a62"/><path d="M38 40 Q50 38 58 46 L60 58 Q50 64 42 60 Z" fill="#ead9c3"/><path d="M30 76 Q40 66 52 72 L56 90 L46 108 L26 108 Z" fill="#cfab7f"/><path d="M32 80 L38 78 L36 106 L28 106 Z" fill="#a88258"/><path d="M60 30 L66 32 L64 56 L61 60 Z" fill="#d8c8ac"/><ellipse cx="60" cy="100" rx="6" ry="9" fill="#c9b9a1"/><ellipse cx="61" cy="92" rx="3.4" ry="3.4" fill="#d9c9b1"/><rect x="9" y="112" width="57" height="10" fill="#dadada"/><rect x="9" y="111" width="57" height="1.5" fill="#f0f0f0"/></g><rect x="66.6" y="108" width="13.4" height="13" fill="#050505"/><rect x="68.4" y="110" width="8.8" height="8.8" fill="#f2f2f2"/><text x="72.8" y="117.3" font-family="Liberation Sans,sans-serif" font-weight="bold" font-size="8.2" fill="#3a3a3a" text-anchor="middle">R</text></svg>
<svg style="left:257.1px;top:491.8px;width:80.4px;height:121.2px" viewBox="0 0 80 121" preserveAspectRatio="none"><defs><linearGradient id="g21" x1="0" y1="0" x2="0" y2="1"><stop offset="0" stop-color="#47494a"/><stop offset="0.35" stop-color="#5f6366"/><stop offset="1" stop-color="#6f747a"/></linearGradient><linearGradient id="g22" x1="0" y1="0" x2="1" y2="0"><stop offset="0" stop-color="#4d1a28"/><stop offset="0.45" stop-color="#6b2a3c"/><stop offset="1" stop-color="#4a1826"/></linearGradient><radialGradient id="g23" cx="0.5" cy="0.5" r="0.5"><stop offset="0" stop-color="#ffffff" stop-opacity="1"/><stop offset="0.5" stop-color="#fff0c4" stop-opacity="1"/><stop offset="1" stop-color="#d9a840" stop-opacity="0"/></radialGradient><filter id="b2014" x="-10%" y="-10%" width="120%" height="120%"><feGaussianBlur stdDeviation="0.6"/></filter></defs><g filter="url(#b2014)"><rect x="-5" y="-5" width="90" height="130" fill="#b9b5a9"/><rect x="-2" y="-2" width="84" height="73" fill="#7b8991"/><rect x="15" y="1" width="45" height="70" fill="#c9a171"/><rect x="15" y="1" width="45" height="7.5" fill="#cfa978"/><rect x="21" y="7.2" width="34" height="63" fill="#2b2b2d"/><rect x="22" y="8" width="32" height="62" fill="url(#g21)"/><rect x="-2" y="-2" width="12" height="71" fill="url(#g22)"/><rect x="64" y="-2" width="12" height="71" fill="url(#g22)"/><rect x="76" y="-2" width="8" height="72" fill="#c9a979"/><rect x="-2" y="67" width="14" height="4" fill="#8a7a78"/><rect x="63" y="67" width="14" height="4" fill="#8a7a78"/><ellipse cx="35.5" cy="22.5" rx="2.4" ry="3" fill="#b39373"/><ellipse cx="40.5" cy="26" rx="1.9" ry="2.2" fill="#a98969"/><path d="M31.5 30 Q36 24.5 41 28 L44.5 33 L45 46 L43 58 L44 68.5 L32 69 L31 48 Z" fill="#ab9179"/><path d="M34 44 L40 40 L42 67 L35 67 Z" fill="#c9b7a3"/><rect x="-2" y="70" width="84" height="7" fill="#55696a"/><rect x="-2" y="73" width="84" height="2.2" fill="#cbc3b3"/><rect x="10" y="71" width="56" height="1.6" fill="#d8d0c0"/><rect x="-2" y="77" width="84" height="6.5" fill="#cbc3ab"/><rect x="6" y="77" width="64" height="1.5" fill="#e0d8c4"/><rect x="-2" y="83.5" width="84" height="41.5" fill="#b3b9c5"/><rect x="-2" y="83.5" width="11" height="41.5" fill="#b9bdc9"/><ellipse cx="4" cy="91.5" rx="3" ry="2.4" fill="#8790a8" fill-opacity=".6"/><ellipse cx="6" cy="101.5" rx="3" ry="2.4" fill="#8790a8" fill-opacity=".6"/><ellipse cx="74" cy="89.5" rx="3" ry="2.4" fill="#8790a8" fill-opacity=".6"/><ellipse cx="72" cy="99.5" rx="3" ry="2.4" fill="#8790a8" fill-opacity=".6"/><ellipse cx="76" cy="107.5" rx="3" ry="2.4" fill="#8790a8" fill-opacity=".6"/><rect x="10" y="82.5" width="54" height="32.5" fill="#c1b289"/><rect x="10" y="82.5" width="1.6" height="32.5" fill="#a9935f"/><rect x="62.4" y="82.5" width="1.6" height="32.5" fill="#a9935f"/><path d="M12 114 L13 108 Q35 88 61 108 L62 114 Z" fill="#4b3b22"/><path d="M17 105 Q35 91.5 57 105" fill="none" stroke="#b48d36" stroke-width="2"/><rect x="15" y="106.5" width="44" height="2.2" fill="#8f6f2b"/><rect x="14" y="108.7" width="46" height="5" fill="#5f4a24"/><ellipse cx="35" cy="110.8" rx="14" ry="5" fill="url(#g23)"/><ellipse cx="35" cy="110.8" rx="8.5" ry="2.9" fill="#ffffff"/><rect x="-2" y="113" width="84" height="12" fill="#c9cdd1"/><rect x="-2" y="113" width="84" height="1.6" fill="#e6e6e6"/><rect x="-2" y="121" width="84" height="1.2" fill="#a9adb1"/><path d="M73 110 L73 90 Q76 84 82 86 L82 110 Z" fill="#c9a9a1"/><ellipse cx="79" cy="84" rx="2.6" ry="3" fill="#3a2a28"/></g><rect x="66.6" y="108" width="13.4" height="13" fill="#050505"/><rect x="68.4" y="110" width="8.8" height="8.8" fill="#f2f2f2"/><text x="72.8" y="117.3" font-family="Liberation Sans,sans-serif" font-weight="bold" font-size="8.2" fill="#3a3a3a" text-anchor="middle">R</text></svg>
<svg style="left:465.9px;top:491.8px;width:80.2px;height:121.2px" viewBox="0 0 80 121" preserveAspectRatio="none"><defs><linearGradient id="g24" x1="0" y1="0" x2="0" y2="1"><stop offset="0" stop-color="#47494a"/><stop offset="0.35" stop-color="#5f6366"/><stop offset="1" stop-color="#6f747a"/></linearGradient><linearGradient id="g25" x1="0" y1="0" x2="1" y2="0"><stop offset="0" stop-color="#4d1a28"/><stop offset="0.45" stop-color="#6b2a3c"/><stop offset="1" stop-color="#4a1826"/></linearGradient><radialGradient id="g26" cx="0.5" cy="0.5" r="0.5"><stop offset="0" stop-color="#ffffff" stop-opacity="1"/><stop offset="0.5" stop-color="#fff0c4" stop-opacity="1"/><stop offset="1" stop-color="#d9a840" stop-opacity="0"/></radialGradient><filter id="b2015" x="-10%" y="-10%" width="120%" height="120%"><feGaussianBlur stdDeviation="0.6"/></filter></defs><g filter="url(#b2015)"><rect x="-5" y="-5" width="90" height="130" fill="#b9b5a9"/><rect x="-2" y="-2" width="84" height="72" fill="#7b8991"/><rect x="15.4" y="0" width="46.6" height="70" fill="#c9a171"/><rect x="15.4" y="0" width="46.6" height="7.5" fill="#cfa978"/><rect x="20.6" y="6.2" width="34.8" height="63" fill="#2b2b2d"/><rect x="21.6" y="7" width="32.8" height="62" fill="url(#g24)"/><rect x="-2" y="-2" width="11" height="70" fill="url(#g25)"/><rect x="66" y="-2" width="12" height="70" fill="url(#g25)"/><rect x="78" y="-2" width="6" height="71" fill="#c9a979"/><rect x="-2" y="66" width="13" height="4" fill="#8a7a78"/><rect x="65" y="66" width="14" height="4" fill="#8a7a78"/><ellipse cx="35.5" cy="21.5" rx="2.4" ry="3" fill="#b39373"/><ellipse cx="40.5" cy="25" rx="1.9" ry="2.2" fill="#a98969"/><path d="M31.5 29 Q36 23.5 41 27 L44.5 32 L45 45 L43 57 L44 67.5 L32 68 L31 47 Z" fill="#ab9179"/><path d="M34 43 L40 39 L42 66 L35 66 Z" fill="#c9b7a3"/><rect x="-2" y="69" width="84" height="8" fill="#55696a"/><rect x="-2" y="72" width="84" height="2.2" fill="#cbc3b3"/><rect x="10" y="70" width="56" height="1.6" fill="#d8d0c0"/><rect x="-2" y="77" width="84" height="6.5" fill="#cbc3ab"/><rect x="6" y="77" width="64" height="1.5" fill="#e0d8c4"/><rect x="-2" y="83.5" width="84" height="41.5" fill="#b3b9c5"/><rect x="-2" y="83.5" width="11" height="41.5" fill="#b9bdc9"/><ellipse cx="4" cy="91.5" rx="3" ry="2.4" fill="#8790a8" fill-opacity=".6"/><ellipse cx="6" cy="101.5" rx="3" ry="2.4" fill="#8790a8" fill-opacity=".6"/><ellipse cx="74" cy="89.5" rx="3" ry="2.4" fill="#8790a8" fill-opacity=".6"/><ellipse cx="72" cy="99.5" rx="3" ry="2.4" fill="#8790a8" fill-opacity=".6"/><ellipse cx="76" cy="107.5" rx="3" ry="2.4" fill="#8790a8" fill-opacity=".6"/><rect x="10" y="82.5" width="54" height="26.5" fill="#c1b289"/><rect x="10" y="82.5" width="1.6" height="26.5" fill="#a9935f"/><rect x="62.4" y="82.5" width="1.6" height="26.5" fill="#a9935f"/><path d="M12 108 L13 102 Q36 81 61 102 L62 108 Z" fill="#4b3b22"/><path d="M17 99 Q36 84.5 57 99" fill="none" stroke="#b48d36" stroke-width="2"/><rect x="15" y="100.5" width="44" height="2.2" fill="#8f6f2b"/><rect x="14" y="102.7" width="46" height="5" fill="#5f4a24"/><ellipse cx="36" cy="104.8" rx="14" ry="5" fill="url(#g26)"/><ellipse cx="36" cy="104.8" rx="8.5" ry="2.9" fill="#ffffff"/><rect x="-2" y="107" width="84" height="18" fill="#c9cdd1"/><rect x="-2" y="107" width="84" height="1.6" fill="#e6e6e6"/><rect x="-2" y="115" width="84" height="1.2" fill="#a9adb1"/></g><rect x="66.6" y="108" width="13.4" height="13" fill="#050505"/><rect x="68.4" y="110" width="8.8" height="8.8" fill="#f2f2f2"/><text x="72.8" y="117.3" font-family="Liberation Sans,sans-serif" font-weight="bold" font-size="8.2" fill="#3a3a3a" text-anchor="middle">R</text></svg>
<svg style="left:674.1px;top:491.8px;width:80.2px;height:121.2px" viewBox="0 0 80 121" preserveAspectRatio="none"><defs><linearGradient id="g27" x1="0" y1="0" x2="0" y2="1"><stop offset="0" stop-color="#47494a"/><stop offset="0.35" stop-color="#5f6366"/><stop offset="1" stop-color="#6f747a"/></linearGradient><linearGradient id="g28" x1="0" y1="0" x2="1" y2="0"><stop offset="0" stop-color="#4d1a28"/><stop offset="0.45" stop-color="#6b2a3c"/><stop offset="1" stop-color="#4a1826"/></linearGradient><radialGradient id="g29" cx="0.5" cy="0.5" r="0.5"><stop offset="0" stop-color="#ffffff" stop-opacity="1"/><stop offset="0.5" stop-color="#fff0c4" stop-opacity="1"/><stop offset="1" stop-color="#d9a840" stop-opacity="0"/></radialGradient><filter id="b2016" x="-10%" y="-10%" width="120%" height="120%"><feGaussianBlur stdDeviation="0.6"/></filter></defs><g filter="url(#b2016)"><rect x="-5" y="-5" width="90" height="130" fill="#b9b5a9"/><rect x="-2" y="-2" width="84" height="76" fill="#7b8991"/><rect x="15" y="3" width="46" height="71" fill="#c9a171"/><rect x="15" y="3" width="46" height="7.5" fill="#cfa978"/><rect x="21" y="9.2" width="34.4" height="64" fill="#2b2b2d"/><rect x="22" y="10" width="32.4" height="63" fill="url(#g27)"/><rect x="-2" y="-2" width="11" height="74" fill="url(#g28)"/><rect x="65" y="-2" width="12" height="74" fill="url(#g28)"/><rect x="77" y="-2" width="7" height="75" fill="#c9a979"/><rect x="-2" y="70" width="13" height="4" fill="#8a7a78"/><rect x="64" y="70" width="14" height="4" fill="#8a7a78"/><ellipse cx="35.7" cy="24.5" rx="2.4" ry="3" fill="#b39373"/><ellipse cx="40.7" cy="28" rx="1.9" ry="2.2" fill="#a98969"/><path d="M31.7 32 Q36.2 26.5 41.2 30 L44.7 35 L45.2 48 L43.2 60 L44.2 71.5 L32.2 72 L31.2 50 Z" fill="#ab9179"/><path d="M34.2 46 L40.2 42 L42.2 70 L35.2 70 Z" fill="#c9b7a3"/><rect x="-2" y="73" width="84" height="7" fill="#55696a"/><rect x="-2" y="76" width="84" height="2.2" fill="#cbc3b3"/><rect x="10" y="74" width="56" height="1.6" fill="#d8d0c0"/><rect x="-2" y="80" width="84" height="6.5" fill="#cbc3ab"/><rect x="6" y="80" width="64" height="1.5" fill="#e0d8c4"/><rect x="-2" y="86.5" width="84" height="38.5" fill="#b3b9c5"/><rect x="-2" y="86.5" width="13" height="38.5" fill="#b9bdc9"/><ellipse cx="4" cy="94.5" rx="3" ry="2.4" fill="#8790a8" fill-opacity=".6"/><ellipse cx="6" cy="104.5" rx="3" ry="2.4" fill="#8790a8" fill-opacity=".6"/><ellipse cx="74" cy="92.5" rx="3" ry="2.4" fill="#8790a8" fill-opacity=".6"/><ellipse cx="72" cy="102.5" rx="3" ry="2.4" fill="#8790a8" fill-opacity=".6"/><ellipse cx="76" cy="110.5" rx="3" ry="2.4" fill="#8790a8" fill-opacity=".6"/><rect x="12" y="85.5" width="53" height="26.5" fill="#c1b289"/><rect x="12" y="85.5" width="1.6" height="26.5" fill="#a9935f"/><rect x="63.4" y="85.5" width="1.6" height="26.5" fill="#a9935f"/><path d="M14 111 L15 105 Q38 85 62 105 L63 111 Z" fill="#4b3b22"/><path d="M19 102 Q38 88.5 58 102" fill="none" stroke="#b48d36" stroke-width="2"/><rect x="17" y="103.5" width="43" height="2.2" fill="#8f6f2b"/><rect x="16" y="105.7" width="45" height="5" fill="#5f4a24"/><ellipse cx="38" cy="107.8" rx="14" ry="5" fill="url(#g29)"/><ellipse cx="38" cy="107.8" rx="8.5" ry="2.9" fill="#ffffff"/><rect x="-2" y="110" width="84" height="15" fill="#c9cdd1"/><rect x="-2" y="110" width="84" height="1.6" fill="#e6e6e6"/><rect x="-2" y="118" width="84" height="1.2" fill="#a9adb1"/></g><rect x="66.6" y="108" width="13.4" height="13" fill="#050505"/><rect x="68.4" y="110" width="8.8" height="8.8" fill="#f2f2f2"/><text x="72.8" y="117.3" font-family="Liberation Sans,sans-serif" font-weight="bold" font-size="8.2" fill="#3a3a3a" text-anchor="middle">R</text></svg>
<svg style="left:12.3px;top:659.7px;width:155.6px;height:104.0px" viewBox="0 0 156 104" preserveAspectRatio="none"><defs><filter id="b2017" x="-10%" y="-10%" width="120%" height="120%"><feGaussianBlur stdDeviation="0.6"/></filter></defs><g filter="url(#b2017)"><rect x="-5" y="-5" width="166" height="115" fill="#7b766d"/><path d="M8 12 L11 2 L22 2 L25 12 Z" fill="#39332f"/><path d="M30 12 L33 2 L40 2 L43 12 Z" fill="#39332f"/><path d="M52 12 L55 2 L68 2 L71 12 Z" fill="#39332f"/><path d="M80 12 L83 2 L92 2 L95 12 Z" fill="#39332f"/><path d="M104 12 L107 2 L120 2 L123 12 Z" fill="#39332f"/><path d="M132 12 L135 2 L146 2 L149 12 Z" fill="#39332f"/><rect x="-2" y="-2" width="160" height="3" fill="#8f8a80"/></g></svg>
<svg style="left:257.0px;top:652.2px;width:80.8px;height:121.0px" viewBox="0 0 80 121" preserveAspectRatio="none"><defs><filter id="b2018" x="-10%" y="-10%" width="120%" height="120%"><feGaussianBlur stdDeviation="0.6"/></filter></defs><g filter="url(#b2018)"><rect x="-5" y="-5" width="90" height="130" fill="#f4f4f4"/><path d="M4 20 L40 6 L76 20 L76 30 L4 30 Z" fill="#c9a39b"/><path d="M10 20 L40 9 L70 20 Z" fill="#e2c9c2"/><rect x="4" y="17" width="72" height="2" fill="#b48c84"/></g></svg>
<svg style="left:465.6px;top:652.2px;width:80.8px;height:121.0px" viewBox="0 0 80 121" preserveAspectRatio="none"><defs><filter id="b2019" x="-10%" y="-10%" width="120%" height="120%"><feGaussianBlur stdDeviation="0.6"/></filter></defs><g filter="url(#b2019)"><rect x="-5" y="-5" width="90" height="130" fill="#f4f4f4"/><path d="M4 20 L40 6 L76 20 L76 30 L4 30 Z" fill="#c9a39b"/><path d="M10 20 L40 9 L70 20 Z" fill="#e2c9c2"/><rect x="4" y="17" width="72" height="2" fill="#b48c84"/></g></svg>
<svg style="left:636.5px;top:661.0px;width:155.6px;height:104.0px" viewBox="0 0 156 104" preserveAspectRatio="none"><defs><filter id="b2020" x="-10%" y="-10%" width="120%" height="120%"><feGaussianBlur stdDeviation="0.6"/></filter></defs><g filter="url(#b2020)"><rect x="-5" y="-5" width="166" height="115" fill="#f1f1f5"/><path d="M-2 -2 L10 -2 L24 14 L-2 14 Z" fill="#8b6b3b"/><path d="M158 -2 L140 -2 L128 14 L158 14 Z" fill="#8b6b3b"/><ellipse cx="6" cy="6" rx="3" ry="3" fill="#5a7ab0"/><ellipse cx="148" cy="5" rx="4" ry="3" fill="#3a2a18"/><rect x="24" y="8" width="104" height="4" fill="#d8d8e0"/></g></svg>
</div>
<span class="t" style="left:391.6px;top:292.0px;font-size:12.5px;color:#ffffff;letter-spacing:-0.23px;font-weight:bold;">RAW Power</span>
<span class="t" style="left:476.1px;top:292.0px;font-size:12.5px;color:#f2f2f2;letter-spacing:-0.26px;">File</span>
<span class="t" style="left:511.4px;top:292.0px;font-size:12.5px;color:#f2f2f2;letter-spacing:-0.21px;">Edit</span>
<span class="t" style="left:548.7px;top:292.0px;font-size:12.5px;color:#f2f2f2;letter-spacing:-0.04px;">View</span>
<span class="t" style="left:592.2px;top:292.0px;font-size:12.5px;color:#f2f2f2;letter-spacing:-0.09px;">Window</span>
<span class="t" style="left:652.3px;top:292.0px;font-size:12.5px;color:#f2f2f2;letter-spacing:0.02px;">Help</span>
<span class="t" style="left:939.5px;top:312.3px;font-size:11.5px;color:#d6d6d6;letter-spacing:-0.04px;">Day 2 - Rome</span>
<span class="t" style="left:351.2px;top:358.6px;font-size:10px;color:#cfcfcf;letter-spacing:0.03px;">Back/Forward</span>
<span class="t" style="left:420.4px;top:358.6px;font-size:10px;color:#cfcfcf;letter-spacing:-0.20px;">RAWs Only</span>
<span class="t" style="left:477.6px;top:358.6px;font-size:10px;color:#cfcfcf;letter-spacing:0.06px;">Add Folder</span>
<span class="t" style="left:542.6px;top:358.6px;font-size:10px;color:#cfcfcf;letter-spacing:-0.02px;">Favorite</span>
<span class="t" style="left:594.5px;top:358.6px;font-size:10px;color:#cfcfcf;letter-spacing:0.04px;">New Tab</span>
<span class="t" style="left:648.7px;top:358.6px;font-size:10px;color:#cfcfcf;letter-spacing:0.04px;">Browser</span>
<span class="t" style="left:1266.8px;top:358.6px;font-size:10px;color:#cfcfcf;letter-spacing:-0.11px;">Tasks</span>
<span class="t" style="left:1310.8px;top:358.6px;font-size:10px;color:#cfcfcf;letter-spacing:0.14px;">Info/Edit</span>
<span class="t" style="left:1364.0px;top:358.6px;font-size:10px;color:#cfcfcf;letter-spacing:0.08px;">QuickLook</span>
<span class="t" style="left:1419.8px;top:358.6px;font-size:10px;color:#cfcfcf;letter-spacing:-0.03px;">Thumbnail Size</span>
<span class="t" style="left:1503.8px;top:358.6px;font-size:10px;color:#cfcfcf;letter-spacing:0.10px;">Viewer</span>
<span class="t" style="left:1557.5px;top:358.6px;font-size:10px;color:#cfcfcf;letter-spacing:0.07px;">Edit</span>
<span class="t" style="left:1428.5px;top:336.7px;font-size:11.5px;color:#ffffff;letter-spacing:0.02px;">Medium</span>
<span class="t" style="left:424.6px;top:378.3px;font-size:10.5px;color:#f0f0f0;letter-spacing:-0.19px;">Day 2 - Rome&nbsp; —&nbsp; /Users/Shared/Mediterranean Vacation</span>
<span class="t" style="left:837.9px;top:378.3px;font-size:10.5px;color:#a9a9a9;letter-spacing:-0.19px;">Day 2 - Rome&nbsp; —&nbsp; /Users/Shared/Mediterranean Vacation</span>
<span class="t" style="left:1295.4px;top:378.3px;font-size:10.5px;color:#a9a9a9;letter-spacing:-0.18px;">2.0 Demo&nbsp; —&nbsp; /Users/nik/Pictures</span>
<span class="t" style="left:349.4px;top:402.9px;font-size:11.5px;color:#e6e6e6;letter-spacing:-0.57px;">FAVORITES</span>
<span class="t" style="left:349.4px;top:530.8px;font-size:11.5px;color:#e6e6e6;letter-spacing:-0.22px;">LOCATIONS</span>
<span class="t" style="left:383.6px;top:423.8px;font-size:12px;color:#ececec;letter-spacing:0.09px;">Mira&#x27;s Gymnastics</span>
<span class="t" style="left:383.6px;top:445.2px;font-size:12px;color:#ececec;letter-spacing:-0.12px;">Transfer</span>
<span class="t" style="left:383.6px;top:467.0px;font-size:12px;color:#ececec;letter-spacing:0.10px;">2.0 Demo</span>
<span class="t" style="left:383.6px;top:551.7px;font-size:12px;color:#ececec;letter-spacing:-0.04px;">Pictures</span>
<span class="t" style="left:383.6px;top:573.2px;font-size:12px;color:#ececec;letter-spacing:0.16px;">Downloads</span>
<span class="t" style="left:383.6px;top:594.6px;font-size:12px;color:#ececec;letter-spacing:-0.08px;">2018</span>
<span class="t" style="left:383.6px;top:616.4px;font-size:12px;color:#ececec;letter-spacing:0.18px;">Mediterranean Vacation</span>
<span class="t" style="left:397.4px;top:638.2px;font-size:12px;color:#ececec;letter-spacing:-0.09px;">Day 1 - Rome</span>
<span class="t" style="left:397.4px;top:659.9px;font-size:12px;color:#ffffff;letter-spacing:-0.09px;">Day 2 - Rome</span>
<span class="t" style="left:397.4px;top:681.4px;font-size:12px;color:#ececec;letter-spacing:-0.05px;">Day 3 - Messina</span>
<span class="t" style="left:397.4px;top:703.0px;font-size:12px;color:#ececec;letter-spacing:-0.00px;">Day 4 - Delos</span>
<span class="t" style="left:397.4px;top:724.7px;font-size:12px;color:#ececec;letter-spacing:-0.06px;">Day 5 - Rhodes</span>
<span class="t" style="left:577.4px;top:534.8px;font-size:11px;color:#e8e8e8;letter-spacing:-0.41px;">DSC01156.ARW</span>
<span class="t" style="left:785.7px;top:534.8px;font-size:11px;color:#e8e8e8;letter-spacing:-0.41px;">DSC01157.ARW</span>
<span class="t" style="left:994.0px;top:534.8px;font-size:11px;color:#e8e8e8;letter-spacing:-0.41px;">DSC01158.ARW</span>
<span class="t" style="left:1202.1px;top:534.8px;font-size:11px;color:#e8e8e8;letter-spacing:-0.41px;">DSC01159.ARW</span>
<span class="t" style="left:577.4px;top:694.7px;font-size:11px;color:#e8e8e8;letter-spacing:-0.41px;">DSC01160.ARW</span>
<span class="t" style="left:785.7px;top:694.7px;font-size:11px;color:#e8e8e8;letter-spacing:-0.41px;">DSC01161.ARW</span>
<span class="t" style="left:994.0px;top:694.7px;font-size:11px;color:#e8e8e8;letter-spacing:-0.41px;">DSC01162.ARW</span>
<span class="t" style="left:1202.1px;top:694.7px;font-size:11px;color:#e8e8e8;letter-spacing:-0.41px;">DSC01163.ARW</span>
<span class="t" style="left:577.4px;top:854.8px;font-size:11px;color:#e8e8e8;letter-spacing:-0.41px;">DSC01164.ARW</span>
<span class="t" style="left:785.7px;top:854.8px;font-size:11px;color:#e8e8e8;letter-spacing:-0.41px;">DSC01165.ARW</span>
<span class="t" style="left:994.0px;top:854.8px;font-size:11px;color:#e8e8e8;letter-spacing:-0.41px;">DSC01166.ARW</span>
<span class="t" style="left:1202.1px;top:854.8px;font-size:11px;color:#e8e8e8;letter-spacing:-0.41px;">DSC01167.ARW</span>
<span class="t" style="left:577.4px;top:1014.7px;font-size:11px;color:#e8e8e8;letter-spacing:-0.41px;">DSC01168.ARW</span>
<span class="t" style="left:785.7px;top:1014.7px;font-size:11px;color:#e8e8e8;letter-spacing:-0.41px;">DSC01169.ARW</span>
<span class="t" style="left:994.0px;top:1014.7px;font-size:11px;color:#e8e8e8;letter-spacing:-0.41px;">DSC01170.ARW</span>
<span class="t" style="left:1202.1px;top:1014.7px;font-size:11px;color:#e8e8e8;letter-spacing:-0.41px;">DSC01171.ARW</span>
<span class="t" style="left:1447.0px;top:400.0px;font-size:11px;color:#e8e8e8;letter-spacing:0.00px;">INFO</span>
<span class="t" style="left:1373.6px;top:416.0px;font-size:10.5px;color:#d2d2d2;letter-spacing:0.02px;">File Name</span>
<span class="t" style="left:1430.8px;top:416.0px;font-size:10.5px;color:#ffffff;letter-spacing:0.12px;font-weight:bold;">DSC01156.ARW</span>
<span class="t" style="left:1379.1px;top:436.8px;font-size:10.5px;color:#d2d2d2;letter-spacing:0.01px;">File Type</span>
<span class="t" style="left:1430.8px;top:436.8px;font-size:10.5px;color:#ffffff;letter-spacing:-0.17px;font-weight:bold;">RAW</span>
<span class="t" style="left:1382.6px;top:457.6px;font-size:10.5px;color:#d2d2d2;letter-spacing:-0.14px;">File Size</span>
<span class="t" style="left:1430.8px;top:457.6px;font-size:10.5px;color:#ffffff;letter-spacing:0.12px;font-weight:bold;">21.2 MB</span>
<span class="t" style="left:1363.1px;top:478.4px;font-size:10.5px;color:#d2d2d2;letter-spacing:0.06px;">Color Profile</span>
<span class="t" style="left:1430.8px;top:478.4px;font-size:10.5px;color:#ffffff;letter-spacing:-0.21px;font-weight:bold;">Display P3</span>
<span class="t" style="left:1397.1px;top:499.1px;font-size:10.5px;color:#d2d2d2;letter-spacing:-0.24px;">Flash</span>
<span class="t" style="left:1430.8px;top:499.1px;font-size:10.5px;color:#ffffff;letter-spacing:-0.23px;font-weight:bold;">Flash did not fire</span>
<span class="t" style="left:1404.1px;top:519.9px;font-size:10.5px;color:#d2d2d2;letter-spacing:-0.20px;">ISO</span>
<span class="t" style="left:1430.8px;top:519.9px;font-size:10.5px;color:#ffffff;letter-spacing:0.14px;font-weight:bold;">ISO 125</span>
<span class="t" style="left:1361.1px;top:540.7px;font-size:10.5px;color:#d2d2d2;letter-spacing:-0.02px;">Focal Length</span>
<span class="t" style="left:1430.8px;top:540.7px;font-size:10.5px;color:#ffffff;letter-spacing:0.04px;font-weight:bold;">13 mm</span>
<span class="t" style="left:1377.6px;top:561.5px;font-size:10.5px;color:#d2d2d2;letter-spacing:-0.04px;">Exposure</span>
<span class="t" style="left:1430.8px;top:561.5px;font-size:10.5px;color:#ffffff;letter-spacing:0.06px;font-weight:bold;">0.00 ev</span>
<span class="t" style="left:1379.6px;top:582.3px;font-size:10.5px;color:#d2d2d2;letter-spacing:0.21px;">Aperture</span>
<span class="t" style="left:1430.8px;top:582.3px;font-size:10.5px;color:#ffffff;letter-spacing:0.23px;font-weight:bold;">ƒ 4.0</span>
<span class="t" style="left:1387.6px;top:603.0px;font-size:10.5px;color:#d2d2d2;letter-spacing:0.02px;">Shutter</span>
<span class="t" style="left:1430.8px;top:603.0px;font-size:10.5px;color:#ffffff;letter-spacing:0.21px;font-weight:bold;">1/160 s</span>
<span class="t" style="left:1384.6px;top:623.8px;font-size:10.5px;color:#d2d2d2;letter-spacing:-0.06px;">Camera</span>
<span class="t" style="left:1430.8px;top:623.8px;font-size:10.5px;color:#ffffff;letter-spacing:0.01px;font-weight:bold;">DSC-RX100M4</span>
<span class="t" style="left:1366.6px;top:644.6px;font-size:10.5px;color:#d2d2d2;letter-spacing:0.07px;">Lens Model</span>
<span class="t" style="left:1430.8px;top:644.6px;font-size:10.5px;color:#ffffff;letter-spacing:-0.01px;font-weight:bold;">Sony 24-70mm F1.8-2.8</span>
<span class="t" style="left:1399.1px;top:665.4px;font-size:10.5px;color:#d2d2d2;letter-spacing:0.08px;">Date</span>
<span class="t" style="left:1430.8px;top:665.4px;font-size:10.5px;color:#ffffff;letter-spacing:0.04px;font-weight:bold;">Jun 16, 2016</span>
<span class="t" style="left:1398.1px;top:686.2px;font-size:10.5px;color:#d2d2d2;letter-spacing:0.14px;">Time</span>
<span class="t" style="left:1430.8px;top:686.2px;font-size:10.5px;color:#ffffff;letter-spacing:0.19px;font-weight:bold;">2:30:36 AM</span>
<span class="t" style="left:1366.1px;top:706.9px;font-size:10.5px;color:#d2d2d2;letter-spacing:0.06px;">Dimensions</span>
<span class="t" style="left:1430.8px;top:706.9px;font-size:10.5px;color:#ffffff;letter-spacing:0.24px;font-weight:bold;">5472 x 3648</span>
<span class="t" style="left:1367.6px;top:727.7px;font-size:10.5px;color:#d2d2d2;letter-spacing:0.09px;">Megapixels</span>
<span class="t" style="left:1430.8px;top:727.7px;font-size:10.5px;color:#ffffff;letter-spacing:0.04px;font-weight:bold;">20.0 Megapixels</span>
</body></html>
